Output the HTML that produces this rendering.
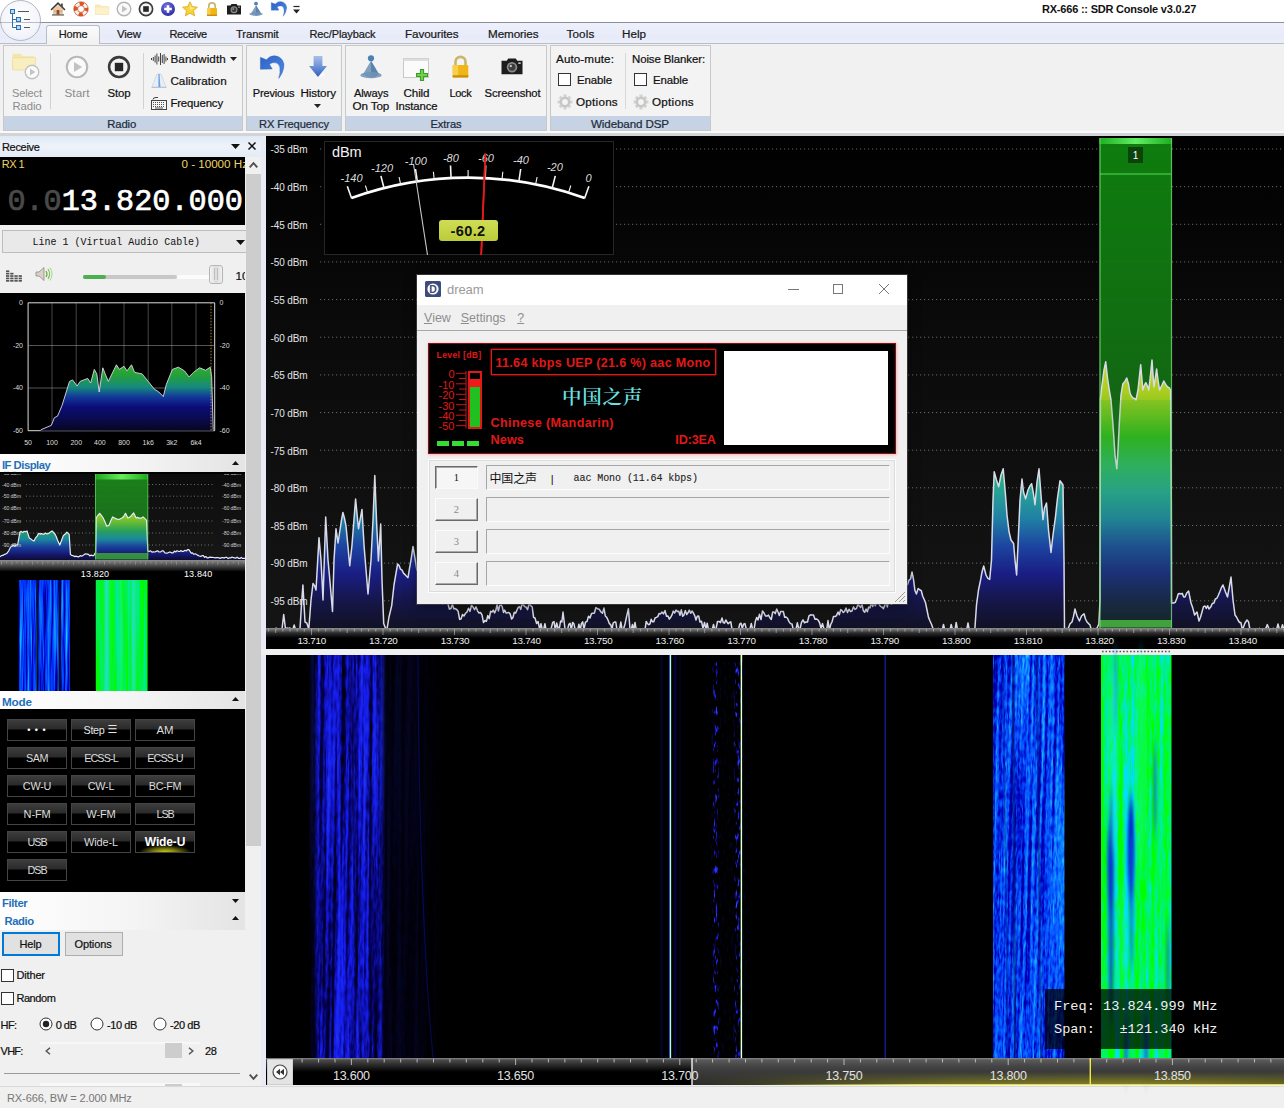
<!DOCTYPE html>
<html lang="en"><head><meta charset="utf-8"><title>RX-666 :: SDR Console v3.0.27</title>
<style>
html,body{margin:0;padding:0;background:#f0f0f0;}
body{width:1284px;height:1108px;overflow:hidden;font-family:"Liberation Sans","Noto Sans CJK SC",sans-serif;font-size:12px;color:#000;}
#app{position:relative;width:1284px;height:1108px;overflow:hidden;background:#f0f0f0;}
.a{position:absolute;}
.t{position:absolute;white-space:nowrap;line-height:1;}
.c{text-align:center;}
svg{position:absolute;overflow:visible;}
/* chrome */
#titlebar{left:0;top:0;width:1284px;height:22px;background:#fff;}
#tabrow{left:0;top:22px;width:1284px;height:21px;background:linear-gradient(#eef1fc,#e7ebf8 70%,#eceffa);border-top:1px solid #8a8f9a;box-sizing:border-box;}
#ribbon{left:0;top:43px;width:1284px;height:89px;background:#f1f1f1;border-top:1px solid #b9bdc6;box-sizing:border-box;}
#ribbonbot{left:0;top:131px;width:1284px;height:2px;background:#fafafa;}
#ribgap{left:0;top:133px;width:1284px;height:3px;background:#d2d4d8;}
.grp{position:absolute;top:45px;height:86px;border:1px solid #c6c8cc;box-sizing:border-box;background:#f3f3f3;}
.grp .lab{position:absolute;left:0;right:0;bottom:0;height:14px;background:#c5d3e4;text-align:center;font-size:12px;line-height:15px;color:#1e2b3c;}
.rt{position:absolute;white-space:nowrap;font-size:12px;line-height:13px;color:#111;}
.rt.g{color:#8b8b8b;}
.tab{position:absolute;top:28px;font-size:12px;line-height:13px;color:#1a1a1a;white-space:nowrap;transform:translateX(-50%);}

</style></head>
<body>
<div id="app">
<div class="a" id="titlebar"></div>
<div class="a" id="tabrow"></div>
<div class="a" id="ribbon"></div>
<div class="a" id="ribbonbot"></div><div class="a" id="ribgap"></div>
<div class="a" style="left:46px;top:25px;width:54px;height:19px;background:linear-gradient(#fbfbfd,#f1f1f1);border:1px solid #b9bdc6;border-bottom:none;border-radius:3px 3px 0 0;box-sizing:border-box;"></div>
<svg style="left:0;top:0" width="44" height="44" viewBox="0 0 44 44"><defs><radialGradient id="gapp" cx="0.5" cy="0.4" r="0.7"><stop offset="0" stop-color="#ffffff"/><stop offset="0.7" stop-color="#f3f5fb"/><stop offset="1" stop-color="#e6e9f4"/></radialGradient></defs><circle cx="20.5" cy="20.5" r="20" fill="url(#gapp)" stroke="#b4b7bf" stroke-width="1"/><path d="M0 22.5 H41" stroke="#8a8f9a" stroke-width="1" opacity="0.55"/><g fill="#b9d6f2" stroke="#2f6fb0" stroke-width="1"><rect x="10.5" y="9.5" width="4" height="4"/><rect x="16.5" y="17.5" width="4" height="4"/><rect x="16.5" y="25.5" width="4" height="4"/></g><path d="M12.5 14 V27.5 H16 M12.5 19.5 H16" fill="none" stroke="#2f6fb0" stroke-width="1"/><path d="M18 11.5 H29 M24 19.5 H30 M24 27.5 H30" stroke="#555" stroke-width="1"/></svg>
<svg style="left:50.0px;top:0.8px" width="16" height="16" viewBox="0 0 16 16"><path d="M1.5 8.5 L8 2.2 L14.5 8.5" fill="none" stroke="#3a3a3a" stroke-width="1.6" stroke-linecap="round"/><rect x="11" y="2.5" width="1.8" height="3.5" fill="#5a4a40"/><path d="M3 8.5 L8 3.8 L13 8.5 V13.5 H3 Z" fill="#e9c9a6"/><rect x="6.6" y="9" width="2.8" height="4.5" fill="#9a4a1e"/><rect x="3.8" y="9.2" width="2" height="2.2" fill="#d9b48c"/><rect x="10.2" y="9.2" width="2" height="2.2" fill="#d9b48c"/><rect x="2" y="13.4" width="12" height="1.1" fill="#4a4a4a"/></svg>
<svg style="left:72.5px;top:0.8px" width="16" height="16" viewBox="0 0 16 16"><circle cx="8" cy="8" r="5.3" fill="none" stroke="#f2f2f2" stroke-width="3.6"/><circle cx="8" cy="8" r="5.3" fill="none" stroke="#e2531c" stroke-width="3.6" stroke-dasharray="4.2 4.13" stroke-dashoffset="2.1"/><circle cx="8" cy="8" r="7.2" fill="none" stroke="#c8451a" stroke-width="0.7"/><circle cx="8" cy="8" r="3.4" fill="none" stroke="#c8451a" stroke-width="0.7"/></svg>
<svg style="left:94.0px;top:0.8px" width="16" height="16" viewBox="0 0 16 16"><g opacity="0.75"><path d="M1 3.5 H6 L7.2 5 H14.5 V13.5 H1 Z" fill="#f3e3a0"/><path d="M1 6 H15.2 L14.5 13.5 H1 Z" fill="#fbeeb8" stroke="#ecd98c" stroke-width="0.5"/></g></svg>
<svg style="left:116.0px;top:0.8px" width="16" height="16" viewBox="0 0 16 16"><circle cx="8" cy="8" r="6.8" fill="#fafafa" stroke="#b4b4b4" stroke-width="1.4"/><path d="M6 4.6 L11.4 8 L6 11.4 Z" fill="#c2c2c2"/></svg>
<svg style="left:138.0px;top:0.8px" width="16" height="16" viewBox="0 0 16 16"><circle cx="8" cy="8" r="6.6" fill="#f4f4f4" stroke="#3b3b3b" stroke-width="1.7"/><rect x="5.2" y="5.2" width="5.6" height="5.6" fill="#262626"/></svg>
<svg style="left:160.0px;top:0.8px" width="16" height="16" viewBox="0 0 16 16"><defs><radialGradient id="gplus" cx="0.4" cy="0.3" r="0.8"><stop offset="0" stop-color="#6f74e0"/><stop offset="1" stop-color="#24249a"/></radialGradient></defs><circle cx="8" cy="8" r="7" fill="url(#gplus)"/><path d="M8 4.2 V11.8 M4.2 8 H11.8" stroke="#fff" stroke-width="2.6"/></svg>
<svg style="left:182.0px;top:0.8px" width="16" height="16" viewBox="0 0 16 16"><path d="M8 0.8 L10.2 5.6 L15.4 6.2 L11.5 9.7 L12.6 14.9 L8 12.2 L3.4 14.9 L4.5 9.7 L0.6 6.2 L5.8 5.6 Z" fill="#f7d43a" stroke="#d9a520" stroke-width="0.8" stroke-linejoin="round"/><path d="M8 3 L9.4 6.4 L12.8 6.8 L8 9 Z" fill="#fdf0a0" opacity="0.8"/></svg>
<svg style="left:204.0px;top:0.8px" width="16" height="16" viewBox="0 0 16 16"><path d="M4.8 7.5 V5 A3.2 3.2 0 0 1 11.2 5 V7.5" fill="none" stroke="#c9b66a" stroke-width="1.7"/><rect x="3" y="7" width="10" height="8" rx="0.8" fill="#f0b618"/><rect x="3" y="7" width="3.5" height="8" fill="#f7cf4a"/><rect x="3" y="13.6" width="10" height="1.4" fill="#c98e0c"/></svg>
<svg style="left:226.0px;top:0.8px" width="16" height="16" viewBox="0 0 16 16"><path d="M1 4.5 H4.5 L5.5 3 H10.5 L11.5 4.5 H15 V13.5 H1 Z" fill="#1d1d1d"/><circle cx="8" cy="8.8" r="3.5" fill="#8a8a8a"/><circle cx="8" cy="8.8" r="2.3" fill="#3c3c3c"/><circle cx="7.2" cy="8" r="0.8" fill="#bdbdbd"/><rect x="12.2" y="5.6" width="1.6" height="1" fill="#d8d8d8"/></svg>
<svg style="left:248.0px;top:0.8px" width="16" height="16" viewBox="0 0 16 16"><circle cx="8" cy="2.6" r="1.9" fill="#4a7fb8"/><path d="M8 4.2 L13 12.6 Q8 16.2 3 12.6 Z" fill="#7fa0bf"/><path d="M8 4.2 L13 12.6 Q10.5 14.4 8 14.5 Z" fill="#5c84ab"/><ellipse cx="8" cy="13" rx="6.6" ry="1.9" fill="#6e93b6" opacity="0.85"/></svg>
<svg style="left:271.0px;top:0.8px" width="16" height="16" viewBox="0 0 25 24"><defs><linearGradient id="gundo16" x1="0" y1="0" x2="1" y2="1"><stop offset="0" stop-color="#2b63c6"/><stop offset="1" stop-color="#4f8ae4"/></linearGradient></defs><path d="M0.4 1.9 L6.6 4.3 Q10 0.2 14.4 0.2 Q20 0.4 22.8 4.5 Q25 8 24.3 12 Q23.5 18 19.1 23.4 Q21 17 20.3 12.5 Q19.5 8.5 16.5 7.5 Q12.5 6.5 9.7 9 L12.5 13.8 L0.4 14 Z" fill="url(#gundo16)" stroke="#2a5cb8" stroke-width="0.4" stroke-linejoin="round"/></svg>
<svg style="left:292px;top:5px" width="9" height="10" viewBox="0 0 9 10"><path d="M1.5 1.5 H7.5" stroke="#222" stroke-width="1.2"/><path d="M1 4.5 H8 L4.5 8.5 Z" fill="#222"/></svg>
<div class="t" style="left:1042.0px;top:2.0px;font-size:11.0px;line-height:14px;color:#111;font-weight:bold;letter-spacing:-0.21px;">RX-666 :: SDR Console v3.0.27</div>
<div class="t" style="left:58.7px;top:27.0px;font-size:11.01px;line-height:14px;color:#1a1a1a;letter-spacing:-0.14px;-webkit-text-stroke:0.22px currentColor;">Home</div>
<div class="t" style="left:116.9px;top:27.0px;font-size:11.44px;line-height:14px;color:#1a1a1a;letter-spacing:-0.12px;-webkit-text-stroke:0.22px currentColor;">View</div>
<div class="t" style="left:169.4px;top:27.0px;font-size:11.0px;line-height:14px;color:#1a1a1a;letter-spacing:-0.32px;-webkit-text-stroke:0.22px currentColor;">Receive</div>
<div class="t" style="left:236.0px;top:27.0px;font-size:11.31px;line-height:14px;color:#1a1a1a;letter-spacing:-0.11px;-webkit-text-stroke:0.22px currentColor;">Transmit</div>
<div class="t" style="left:309.5px;top:27.0px;font-size:11.01px;line-height:14px;color:#1a1a1a;letter-spacing:-0.11px;-webkit-text-stroke:0.22px currentColor;">Rec/Playback</div>
<div class="t" style="left:405.0px;top:27.0px;font-size:11.69px;line-height:14px;color:#1a1a1a;letter-spacing:-0.11px;-webkit-text-stroke:0.22px currentColor;">Favourites</div>
<div class="t" style="left:488.0px;top:27.0px;font-size:11.7px;line-height:14px;color:#1a1a1a;letter-spacing:-0.11px;-webkit-text-stroke:0.22px currentColor;">Memories</div>
<div class="t" style="left:566.5px;top:27.0px;font-size:11.7px;line-height:14px;color:#1a1a1a;letter-spacing:0.14px;-webkit-text-stroke:0.22px currentColor;">Tools</div>
<div class="t" style="left:622.0px;top:27.0px;font-size:11.7px;line-height:14px;color:#1a1a1a;letter-spacing:-0.02px;-webkit-text-stroke:0.22px currentColor;">Help</div>
<div class="grp" style="left:3px;width:240px;"><div class="lab"></div></div>
<div class="grp" style="left:246px;width:96px;"><div class="lab"></div></div>
<div class="grp" style="left:345px;width:202px;"><div class="lab"></div></div>
<div class="grp" style="left:550px;width:161px;"><div class="lab"></div></div>
<div class="t" style="left:107.2px;top:117.0px;font-size:11.32px;line-height:14px;color:#1e2b3c;letter-spacing:-0.12px;-webkit-text-stroke:0.22px currentColor;">Radio</div>
<div class="t" style="left:259.0px;top:117.0px;font-size:11.17px;line-height:14px;color:#1e2b3c;letter-spacing:-0.12px;-webkit-text-stroke:0.22px currentColor;">RX Frequency</div>
<div class="t" style="left:430.5px;top:117.0px;font-size:11.16px;line-height:14px;color:#1e2b3c;letter-spacing:-0.10px;-webkit-text-stroke:0.22px currentColor;">Extras</div>
<div class="t" style="left:591.0px;top:117.0px;font-size:11.64px;line-height:14px;color:#1e2b3c;letter-spacing:-0.13px;-webkit-text-stroke:0.22px currentColor;">Wideband DSP</div>
<div class="a" style="left:50px;top:53px;width:1px;height:56px;background:#d2d2d2;"></div>
<div class="a" style="left:143px;top:53px;width:1px;height:56px;background:#d2d2d2;"></div>
<div class="a" style="left:624.5px;top:53px;width:1px;height:56px;background:#d8d8d8;"></div>
<svg style="left:11.0px;top:48.0px" width="26" height="26" viewBox="0 0 16 16"><g opacity="0.85"><path d="M1 3.5 H6 L7.2 5 H14.5 V13.5 H1 Z" fill="#f3e3a0"/><path d="M1 6 H15.2 L14.5 13.5 H1 Z" fill="#fbeeb8" stroke="#ecd98c" stroke-width="0.5"/></g></svg>
<svg style="left:24.0px;top:64.0px" width="16" height="16" viewBox="0 0 16 16"><circle cx="8" cy="8" r="6.8" fill="#fafafa" stroke="#c2c2c2" stroke-width="1.4"/><path d="M6 4.6 L11.4 8 L6 11.4 Z" fill="#c4c4c4"/></svg>
<div class="t" style="left:12.0px;top:86.0px;font-size:11.01px;line-height:14px;color:#8b8b8b;letter-spacing:-0.10px;">Select</div>
<div class="t" style="left:12.5px;top:99.0px;font-size:11.32px;line-height:14px;color:#8b8b8b;letter-spacing:-0.12px;">Radio</div>
<svg style="left:65.0px;top:55.0px" width="24" height="24" viewBox="0 0 16 16"><circle cx="8" cy="8" r="6.8" fill="#fafafa" stroke="#b9b9b9" stroke-width="1.4"/><path d="M6 4.6 L11.4 8 L6 11.4 Z" fill="#c2c2c2"/></svg>
<div class="t" style="left:64.5px;top:86.0px;font-size:11.7px;line-height:14px;color:#8b8b8b;letter-spacing:0.06px;">Start</div>
<svg style="left:107.0px;top:55.0px" width="24" height="24" viewBox="0 0 16 16"><circle cx="8" cy="8" r="6.6" fill="#f4f4f4" stroke="#3b3b3b" stroke-width="1.7"/><rect x="5.2" y="5.2" width="5.6" height="5.6" fill="#262626"/></svg>
<div class="t" style="left:107.5px;top:86.0px;font-size:11.4px;line-height:14px;color:#111;letter-spacing:-0.11px;-webkit-text-stroke:0.22px currentColor;">Stop</div>
<svg style="left:150.5px;top:52px" width="17" height="14" viewBox="0 0 17 14"><rect x="0.0" y="6.0" width="1" height="2" fill="#444"/><rect x="1.8" y="5.0" width="1" height="4" fill="#444"/><rect x="3.6" y="3.5" width="1" height="7" fill="#444"/><rect x="5.4" y="1.5" width="1" height="11" fill="#444"/><rect x="7.2" y="4.5" width="1" height="5" fill="#444"/><rect x="9.0" y="1.0" width="1" height="12" fill="#444"/><rect x="10.8" y="3.0" width="1" height="8" fill="#444"/><rect x="12.6" y="2.0" width="1" height="10" fill="#444"/><rect x="14.4" y="4.5" width="1" height="5" fill="#444"/><rect x="16.0" y="6.0" width="1" height="2" fill="#444"/></svg>
<div class="t" style="left:170.4px;top:52.0px;font-size:11.7px;line-height:14px;color:#111;letter-spacing:0.10px;-webkit-text-stroke:0.22px currentColor;">Bandwidth</div>
<svg style="left:230px;top:57px" width="7" height="4" viewBox="0 0 7 4"><path d="M0 0 H7 L3.5 4 Z" fill="#222"/></svg>
<svg style="left:151px;top:73px" width="16" height="16" viewBox="0 0 16 16"><path d="M6 1 H10 L15 14 H1 Z" fill="#e7eef8" stroke="#c9d2df" stroke-width="0.8"/><path d="M8 1 L9.6 14 H8 Z" fill="#7fb0e6"/><path d="M8 1 V14" stroke="#5b93d6" stroke-width="1"/><path d="M0.5 14.5 H15.5" stroke="#b8c4d6" stroke-width="1"/></svg>
<div class="t" style="left:170.4px;top:74.0px;font-size:11.7px;line-height:14px;color:#111;letter-spacing:0.04px;-webkit-text-stroke:0.22px currentColor;">Calibration</div>
<svg style="left:151px;top:96px" width="16" height="15" viewBox="0 0 16 15"><path d="M2 3.5 Q2 1.5 5 1.5 H7" fill="none" stroke="#444" stroke-width="1"/><rect x="0.5" y="4.5" width="15" height="9" fill="#f6f6f6" stroke="#444" stroke-width="1"/><path d="M2 6.5 H14 M2 8.5 H14 M2 10.5 H14" stroke="#555" stroke-width="1" stroke-dasharray="1 1"/><path d="M4 12 H12" stroke="#555" stroke-width="1"/></svg>
<div class="t" style="left:170.4px;top:96.0px;font-size:11.36px;line-height:14px;color:#111;letter-spacing:-0.12px;-webkit-text-stroke:0.22px currentColor;">Frequency</div>
<svg style="left:260.4px;top:54.5px" width="24.5" height="24.5" viewBox="0 0 25 24"><defs><linearGradient id="gundo24" x1="0" y1="0" x2="1" y2="1"><stop offset="0" stop-color="#2b63c6"/><stop offset="1" stop-color="#4f8ae4"/></linearGradient></defs><path d="M0.4 1.9 L6.6 4.3 Q10 0.2 14.4 0.2 Q20 0.4 22.8 4.5 Q25 8 24.3 12 Q23.5 18 19.1 23.4 Q21 17 20.3 12.5 Q19.5 8.5 16.5 7.5 Q12.5 6.5 9.7 9 L12.5 13.8 L0.4 14 Z" fill="url(#gundo24)" stroke="#2a5cb8" stroke-width="0.4" stroke-linejoin="round"/></svg>
<div class="t" style="left:252.7px;top:86.0px;font-size:11.0px;line-height:14px;color:#111;letter-spacing:-0.14px;-webkit-text-stroke:0.22px currentColor;">Previous</div>
<svg style="left:309.0px;top:55.7px" width="18.0" height="21" viewBox="0 0 18 21"><defs><linearGradient id="gdn" x1="0" y1="0" x2="0" y2="1"><stop offset="0" stop-color="#a9bfe8"/><stop offset="0.5" stop-color="#6e92d8"/><stop offset="1" stop-color="#2f5cc0"/></linearGradient></defs><path d="M4.6 0 H13.4 V10 H18 L9 21 L0 10 H4.6 Z" fill="url(#gdn)"/><path d="M9 21.5 L14.5 15 L16 20 Z" fill="#fff" opacity="0.6"/></svg>
<div class="t" style="left:300.4px;top:86.0px;font-size:11.64px;line-height:14px;color:#111;letter-spacing:-0.10px;-webkit-text-stroke:0.22px currentColor;">History</div>
<svg style="left:314px;top:104px" width="7" height="4" viewBox="0 0 7 4"><path d="M0 0 H7 L3.5 4 Z" fill="#222"/></svg>
<svg style="left:358.0px;top:54.0px" width="26" height="26" viewBox="0 0 16 16"><circle cx="8" cy="2.6" r="1.9" fill="#4a7fb8"/><path d="M8 4.2 L13 12.6 Q8 16.2 3 12.6 Z" fill="#7fa0bf"/><path d="M8 4.2 L13 12.6 Q10.5 14.4 8 14.5 Z" fill="#5c84ab"/><ellipse cx="8" cy="13" rx="6.6" ry="1.9" fill="#6e93b6" opacity="0.85"/></svg>
<div class="t" style="left:354.0px;top:86.0px;font-size:11.08px;line-height:14px;color:#111;letter-spacing:-0.12px;-webkit-text-stroke:0.22px currentColor;">Always</div>
<div class="t" style="left:352.5px;top:99.0px;font-size:11.7px;line-height:14px;color:#111;letter-spacing:-0.12px;-webkit-text-stroke:0.22px currentColor;">On Top</div>
<svg style="left:402px;top:56px" width="28" height="26" viewBox="0 0 28 26"><rect x="1.5" y="2.5" width="25" height="19" fill="#fbfbfb" stroke="#c9c9c9" stroke-width="1"/><rect x="1.5" y="2.5" width="25" height="2.5" fill="#dedede"/><path d="M20 13 V25 M14 19 H26" stroke="#3a9a2a" stroke-width="4.2"/><path d="M20 14 V24 M15 19 H25" stroke="#6fd24c" stroke-width="2.2"/></svg>
<div class="t" style="left:403.5px;top:86.0px;font-size:11.64px;line-height:14px;color:#111;letter-spacing:-0.11px;-webkit-text-stroke:0.22px currentColor;">Child</div>
<div class="t" style="left:395.5px;top:99.0px;font-size:11.33px;line-height:14px;color:#111;letter-spacing:-0.10px;-webkit-text-stroke:0.22px currentColor;">Instance</div>
<svg style="left:448.0px;top:53.5px" width="25" height="25" viewBox="0 0 16 16"><path d="M4.8 7.5 V5 A3.2 3.2 0 0 1 11.2 5 V7.5" fill="none" stroke="#c9b66a" stroke-width="1.7"/><rect x="3" y="7" width="10" height="8" rx="0.8" fill="#f0b618"/><rect x="3" y="7" width="3.5" height="8" fill="#f7cf4a"/><rect x="3" y="13.6" width="10" height="1.4" fill="#c98e0c"/></svg>
<div class="t" style="left:449.6px;top:86.0px;font-size:11.0px;line-height:14px;color:#111;letter-spacing:-0.36px;-webkit-text-stroke:0.22px currentColor;">Lock</div>
<svg style="left:500.0px;top:54.0px" width="24" height="24" viewBox="0 0 16 16"><path d="M1 4.5 H4.5 L5.5 3 H10.5 L11.5 4.5 H15 V13.5 H1 Z" fill="#1d1d1d"/><circle cx="8" cy="8.8" r="3.5" fill="#8a8a8a"/><circle cx="8" cy="8.8" r="2.3" fill="#3c3c3c"/><circle cx="7.2" cy="8" r="0.8" fill="#bdbdbd"/><rect x="12.2" y="5.6" width="1.6" height="1" fill="#d8d8d8"/></svg>
<div class="t" style="left:484.6px;top:86.0px;font-size:11.29px;line-height:14px;color:#111;letter-spacing:-0.11px;-webkit-text-stroke:0.22px currentColor;">Screenshot</div>
<div class="t" style="left:556.0px;top:52.0px;font-size:11.7px;line-height:14px;color:#111;letter-spacing:0.08px;-webkit-text-stroke:0.22px currentColor;">Auto-mute:</div>
<div class="a" style="left:558px;top:73px;width:13px;height:13px;border:1px solid #333;background:#fff;box-sizing:border-box;"></div>
<div class="t" style="left:577.0px;top:73.0px;font-size:11.46px;line-height:14px;color:#111;letter-spacing:-0.11px;-webkit-text-stroke:0.22px currentColor;">Enable</div>
<svg style="left:557.0px;top:94.3px" width="16" height="16" viewBox="0 0 16 16"><g stroke="#d2d2d2" stroke-width="3.2"><path d="M8 0.6 V3.4 M8 12.6 V15.4 M0.6 8 H3.4 M12.6 8 H15.4 M2.8 2.8 L4.8 4.8 M11.2 11.2 L13.2 13.2 M2.8 13.2 L4.8 11.2 M11.2 4.8 L13.2 2.8"/></g><circle cx="8" cy="8" r="4.1" fill="#f4f4f4" stroke="#c6c6c6" stroke-width="2.4"/></svg>
<div class="t" style="left:576.0px;top:95.0px;font-size:11.7px;line-height:14px;color:#111;letter-spacing:0.24px;-webkit-text-stroke:0.22px currentColor;">Options</div>
<div class="t" style="left:632.0px;top:52.0px;font-size:11.45px;line-height:14px;color:#111;letter-spacing:-0.10px;-webkit-text-stroke:0.22px currentColor;">Noise Blanker:</div>
<div class="a" style="left:634px;top:73px;width:13px;height:13px;border:1px solid #333;background:#fff;box-sizing:border-box;"></div>
<div class="t" style="left:653.0px;top:73.0px;font-size:11.46px;line-height:14px;color:#111;letter-spacing:-0.11px;-webkit-text-stroke:0.22px currentColor;">Enable</div>
<svg style="left:633.0px;top:94.3px" width="16" height="16" viewBox="0 0 16 16"><g stroke="#d2d2d2" stroke-width="3.2"><path d="M8 0.6 V3.4 M8 12.6 V15.4 M0.6 8 H3.4 M12.6 8 H15.4 M2.8 2.8 L4.8 4.8 M11.2 11.2 L13.2 13.2 M2.8 13.2 L4.8 11.2 M11.2 4.8 L13.2 2.8"/></g><circle cx="8" cy="8" r="4.1" fill="#f4f4f4" stroke="#c6c6c6" stroke-width="2.4"/></svg>
<div class="t" style="left:652.0px;top:95.0px;font-size:11.7px;line-height:14px;color:#111;letter-spacing:0.24px;-webkit-text-stroke:0.22px currentColor;">Options</div>
<div class="a" style="left:0px;top:1086px;width:1284px;height:22px;background:#f0f0f0;border-top:1px solid #d9d9d9;box-sizing:border-box;"></div>
<div class="t" style="left:7.0px;top:1091.0px;font-size:11.06px;line-height:14px;color:#777;letter-spacing:-0.12px;">RX-666, BW = 2.000 MHz</div>
<div class="a" style="left:0px;top:136px;width:266px;height:950px;background:#f0f0f0;"></div>
<div class="a" style="left:0px;top:136px;width:262px;height:21px;background:linear-gradient(#dfe9f5,#eef3fa 50%,#e3ebf5);"></div>
<div class="t" style="left:2.0px;top:140.0px;font-size:11.0px;line-height:14px;color:#111;letter-spacing:-0.32px;-webkit-text-stroke:0.22px currentColor;">Receive</div>
<svg style="left:231px;top:144px" width="9" height="5" viewBox="0 0 9 5"><path d="M0 0 H9 L4.5 5 Z" fill="#111"/></svg>
<svg style="left:248px;top:141.5px" width="8" height="8" viewBox="0 0 8 8"><path d="M0.5 0.5 L7.5 7.5 M7.5 0.5 L0.5 7.5" stroke="#111" stroke-width="1.5"/></svg>
<div class="a" style="left:246px;top:157px;width:15px;height:929px;background:#f0f0f0;"></div>
<div class="a" style="left:246px;top:174px;width:15px;height:672px;background:#cdcdcd;"></div>
<svg style="left:249px;top:162px" width="9" height="6" viewBox="0 0 9 6"><path d="M0.7 5.3 L4.5 1.2 L8.3 5.3" fill="none" stroke="#505050" stroke-width="1.9"/></svg>
<svg style="left:249px;top:1074px" width="9" height="6" viewBox="0 0 9 6"><path d="M0.7 0.7 L4.5 4.8 L8.3 0.7" fill="none" stroke="#505050" stroke-width="1.9"/></svg>
<div class="a" style="left:0;top:157px;width:245px;height:68px;background:#000;overflow:hidden;">
<div class="t" style="left:1.7px;top:0.0px;font-size:11.0px;line-height:14px;color:#ecd46a;letter-spacing:-0.49px;">RX 1</div>
<div class="t" style="left:181.5px;top:0.0px;font-size:11.7px;line-height:14px;color:#ecd46a;letter-spacing:-0.04px;">0 - 10000 Hz</div>
<div class="t" style="left:7.4px;top:27px;font-family:'Liberation Mono',monospace;font-size:30.2px;line-height:36px;color:#fff;letter-spacing:0px;-webkit-text-stroke:0.7px currentColor;"><span style="color:#4a4a4a">0.0</span>13.820.000</div>
</div>
<div class="a" style="left:2px;top:229.5px;width:244px;height:23px;background:#e9e9e9;border:1px solid #bdbdbd;border-right:none;box-sizing:border-box;"></div>
<div class="t" style="left:32.6px;top:237.0px;font-size:10px;line-height:12px;color:#111;font-family:'Liberation Mono','Noto Sans CJK SC',monospace;letter-spacing:-0.02px;">Line 1 (Virtual Audio Cable)</div>
<svg style="left:236px;top:240px" width="9" height="5" viewBox="0 0 9 5"><path d="M0 0 H9 L4.5 5 Z" fill="#111"/></svg>
<svg style="left:6px;top:269px" width="17" height="13" viewBox="0 0 17 13"><rect x="0.0" y="11.0" width="3.3" height="1.7" fill="#555"/><rect x="0.0" y="8.6" width="3.3" height="1.7" fill="#555"/><rect x="0.0" y="6.2" width="3.3" height="1.7" fill="#555"/><rect x="0.0" y="3.8" width="3.3" height="1.7" fill="#555"/><rect x="0.0" y="1.4" width="3.3" height="1.7" fill="#555"/><rect x="4.2" y="11.0" width="3.3" height="1.7" fill="#555"/><rect x="4.2" y="8.6" width="3.3" height="1.7" fill="#555"/><rect x="4.2" y="6.2" width="3.3" height="1.7" fill="#555"/><rect x="4.2" y="3.8" width="3.3" height="1.7" fill="#555"/><rect x="8.4" y="11.0" width="3.3" height="1.7" fill="#555"/><rect x="8.4" y="8.6" width="3.3" height="1.7" fill="#555"/><rect x="8.4" y="6.2" width="3.3" height="1.7" fill="#555"/><rect x="12.6" y="11.0" width="3.3" height="1.7" fill="#555"/><rect x="12.6" y="8.6" width="3.3" height="1.7" fill="#555"/><rect x="12.6" y="6.2" width="3.3" height="1.7" fill="#555"/></svg>
<svg style="left:35px;top:266px" width="18" height="16" viewBox="0 0 18 16"><path d="M1 6 H4 L9 1.5 V14.5 L4 10 H1 Z" fill="#d9d2c4" stroke="#8c8c8c" stroke-width="0.8" stroke-linejoin="round"/><path d="M11 5 Q13 8 11 11" fill="none" stroke="#5fae3a" stroke-width="1.2"/><path d="M13 3 Q16.2 8 13 13" fill="none" stroke="#7cc257" stroke-width="1.2"/><path d="M15 1.5 Q19 8 15 14.5" fill="none" stroke="#a4d98a" stroke-width="1"/></svg>
<div class="a" style="left:83px;top:275px;width:94px;height:4px;background:#c8c8c8;border-radius:2px;"></div>
<div class="a" style="left:177px;top:275px;width:34px;height:4px;background:#fbfbfb;border-radius:2px;"></div>
<div class="a" style="left:83px;top:275px;width:23px;height:4px;background:#4caf50;border-radius:2px;"></div>
<div class="a" style="left:209px;top:264.5px;width:14px;height:19px;background:linear-gradient(90deg,#f4f4f4,#dcdcdc 50%,#f0f0f0);border:1px solid #b5b5b5;border-radius:3px;box-sizing:border-box;"></div>
<div class="a" style="left:214px;top:268px;width:1px;height:12px;background:#bdbdbd;"></div>
<div class="a" style="left:217px;top:268px;width:1px;height:12px;background:#bdbdbd;"></div>
<div class="a" style="left:230px;top:266px;width:15px;height:20px;overflow:hidden;"><div class="t" style="left:5.5px;top:3.0px;font-size:11.7px;line-height:14px;color:#111;-webkit-text-stroke:0.22px currentColor;">100</div>
</div>
<div class="a" style="left:0px;top:293px;width:245px;height:161px;background:#000;"></div>
<svg style="left:0;top:0" width="245" height="460" viewBox="0 0 245 460"><defs><linearGradient id="gaud" gradientUnits="userSpaceOnUse" x1="0" y1="360" x2="0" y2="431"><stop offset="0" stop-color="#3cb52e"/><stop offset="0.22" stop-color="#23a03a"/><stop offset="0.38" stop-color="#178a7c"/><stop offset="0.52" stop-color="#12389a"/><stop offset="0.66" stop-color="#0c0c78"/><stop offset="0.85" stop-color="#0a0a4a"/><stop offset="1" stop-color="#06061e"/></linearGradient></defs><path d="M28.1 302.8 V430.7" stroke="#e8e8e8" stroke-width="1" opacity="0.95"/><path d="M52 302.8 V430.7" stroke="#b0b0b0" stroke-width="0.8" opacity="0.5"/><path d="M76.2 302.8 V430.7" stroke="#b0b0b0" stroke-width="0.8" opacity="0.5"/><path d="M99.8 302.8 V430.7" stroke="#b0b0b0" stroke-width="0.8" opacity="0.5"/><path d="M124 302.8 V430.7" stroke="#b0b0b0" stroke-width="0.8" opacity="0.5"/><path d="M148.2 302.8 V430.7" stroke="#b0b0b0" stroke-width="0.8" opacity="0.5"/><path d="M171.8 302.8 V430.7" stroke="#b0b0b0" stroke-width="0.8" opacity="0.5"/><path d="M196 302.8 V430.7" stroke="#b0b0b0" stroke-width="0.8" opacity="0.5"/><path d="M214.7 302.8 V430.7" stroke="#e8e8e8" stroke-width="1" opacity="0.95"/><path d="M28.1 302.8 H214.7" stroke="#e8e8e8" stroke-width="1" opacity="0.95"/><path d="M28.1 345.5 H214.7" stroke="#b0b0b0" stroke-width="0.8" opacity="0.6"/><path d="M28.1 388 H214.7" stroke="#b0b0b0" stroke-width="0.8" opacity="0.6"/><path d="M28.1 430.7 H214.7" stroke="#e8e8e8" stroke-width="1" opacity="0.95"/><path d="M40.8 429.8 L51.4 425.3 L54.4 417.7 L57.5 416.2 L62.0 405.6 L69.5 381.4 L72.6 379.9 L77.1 386.0 L80.1 381.4 L87.7 378.4 L90.7 383.0 L94.3 369.4 L96.8 373.9 L99.2 392.0 L102.8 367.8 L105.2 373.9 L108.3 381.4 L116.4 364.8 L119.4 369.4 L124.0 366.3 L127.0 370.9 L131.5 364.8 L134.6 372.4 L142.1 373.9 L148.2 381.4 L154.2 389.0 L158.8 392.0 L163.3 396.6 L166.3 384.5 L172.4 369.4 L178.4 367.2 L184.5 370.9 L189.0 376.9 L193.5 372.4 L199.6 367.8 L205.6 370.3 L210.2 367.2 L211.7 376.9 L213.2 429.8 L213.2 430.7 L40.8 430.7 Z" fill="url(#gaud)"/><path d="M40.8 429.8 L51.4 425.3 L54.4 417.7 L57.5 416.2 L62.0 405.6 L69.5 381.4 L72.6 379.9 L77.1 386.0 L80.1 381.4 L87.7 378.4 L90.7 383.0 L94.3 369.4 L96.8 373.9 L99.2 392.0 L102.8 367.8 L105.2 373.9 L108.3 381.4 L116.4 364.8 L119.4 369.4 L124.0 366.3 L127.0 370.9 L131.5 364.8 L134.6 372.4 L142.1 373.9 L148.2 381.4 L154.2 389.0 L158.8 392.0 L163.3 396.6 L166.3 384.5 L172.4 369.4 L178.4 367.2 L184.5 370.9 L189.0 376.9 L193.5 372.4 L199.6 367.8 L205.6 370.3 L210.2 367.2 L211.7 376.9 L213.2 429.8" fill="none" stroke="#d6dce6" stroke-width="0.9"/><path d="M211 302.8 V430.7" stroke="#d9a441" stroke-width="0.8" stroke-dasharray="1.5 1.5"/></svg>
<div class="t" style="left:19.1px;top:299.0px;font-size:7px;line-height:8px;color:#ddd;">0</div>
<div class="t" style="left:219.5px;top:299.0px;font-size:7px;line-height:8px;color:#ddd;">0</div>
<div class="t" style="left:12.9px;top:342.0px;font-size:7px;line-height:8px;color:#ddd;">-20</div>
<div class="t" style="left:219.5px;top:342.0px;font-size:7px;line-height:8px;color:#ddd;">-20</div>
<div class="t" style="left:12.9px;top:384.0px;font-size:7px;line-height:8px;color:#ddd;">-40</div>
<div class="t" style="left:219.5px;top:384.0px;font-size:7px;line-height:8px;color:#ddd;">-40</div>
<div class="t" style="left:12.9px;top:427.0px;font-size:7px;line-height:8px;color:#ddd;">-60</div>
<div class="t" style="left:219.5px;top:427.0px;font-size:7px;line-height:8px;color:#ddd;">-60</div>
<div class="t" style="left:24.2px;top:439.0px;font-size:7px;line-height:8px;color:#ddd;">50</div>
<div class="t" style="left:46.2px;top:439.0px;font-size:7px;line-height:8px;color:#ddd;">100</div>
<div class="t" style="left:70.4px;top:439.0px;font-size:7px;line-height:8px;color:#ddd;">200</div>
<div class="t" style="left:94.0px;top:439.0px;font-size:7px;line-height:8px;color:#ddd;">400</div>
<div class="t" style="left:118.2px;top:439.0px;font-size:7px;line-height:8px;color:#ddd;">800</div>
<div class="t" style="left:142.6px;top:439.0px;font-size:7px;line-height:8px;color:#ddd;">1k6</div>
<div class="t" style="left:166.2px;top:439.0px;font-size:7px;line-height:8px;color:#ddd;">3k2</div>
<div class="t" style="left:190.4px;top:439.0px;font-size:7px;line-height:8px;color:#ddd;">6k4</div>
<div class="a" style="left:0px;top:454px;width:245px;height:18px;background:linear-gradient(90deg,#ffffff 0%,#f4f4f4 55%,#e4e4e4 100%);"></div>
<div class="t" style="left:1.9px;top:458.0px;font-size:11.28px;line-height:14px;color:#1f70b8;font-weight:bold;letter-spacing:-0.48px;">IF Display</div>
<svg style="left:232px;top:461px" width="7" height="4" viewBox="0 0 7 4"><path d="M0 4 H7 L3.5 0 Z" fill="#111"/></svg>
<div class="a" style="left:0px;top:472px;width:245px;height:219px;background:#000;"></div>
<div class="a" style="left:0px;top:472px;width:245px;height:88px;background:linear-gradient(#0c0c0c,#171717);"></div>
<svg style="left:0;top:0" width="245" height="700" viewBox="0 0 245 700"><defs><linearGradient id="gif" gradientUnits="userSpaceOnUse" x1="0" y1="510" x2="0" y2="560"><stop offset="0" stop-color="#b4d22a"/><stop offset="0.22" stop-color="#6fc030"/><stop offset="0.42" stop-color="#28a05a"/><stop offset="0.58" stop-color="#1c88a0"/><stop offset="0.75" stop-color="#1a3a9a"/><stop offset="0.9" stop-color="#15156a"/><stop offset="1" stop-color="#0c0c30"/></linearGradient><linearGradient id="gifband" x1="0" y1="0" x2="0" y2="1"><stop offset="0" stop-color="#1a8a1a"/><stop offset="1" stop-color="#1d6a1d"/></linearGradient><linearGradient id="gstrip" x1="0" y1="0" x2="0" y2="1"><stop offset="0" stop-color="#8c8c8c"/><stop offset="1" stop-color="#0a0a0a"/></linearGradient><linearGradient id="gcap" x1="0" y1="0" x2="1" y2="0"><stop offset="0" stop-color="#1fa81f"/><stop offset="0.5" stop-color="#6bea5b"/><stop offset="1" stop-color="#1fa81f"/></linearGradient></defs><path d="M26 484.5 H214" stroke="#999" stroke-width="0.7" stroke-dasharray="1 2.5"/><path d="M26 496.2 H214" stroke="#999" stroke-width="0.7" stroke-dasharray="1 2.5"/><path d="M26 508 H214" stroke="#999" stroke-width="0.7" stroke-dasharray="1 2.5"/><path d="M26 521 H214" stroke="#999" stroke-width="0.7" stroke-dasharray="1 2.5"/><path d="M26 533 H214" stroke="#999" stroke-width="0.7" stroke-dasharray="1 2.5"/><path d="M26 545 H214" stroke="#999" stroke-width="0.7" stroke-dasharray="1 2.5"/><rect x="95.5" y="473.5" width="52.3" height="86" fill="url(#gifband)" opacity="0.92"/><rect x="95.5" y="473.5" width="52.3" height="6" fill="url(#gcap)"/><path d="M0.0 556.7 L1.4 555.6 L2.8 555.4 L4.2 554.4 L5.6 554.1 L7.0 553.2 L8.6 551.1 L10.2 547.7 L11.7 546.2 L13.2 545.0 L14.7 546.2 L16.1 544.9 L17.6 545.0 L19.9 532.1 L21.3 531.4 L22.8 532.5 L24.2 531.3 L25.6 531.8 L27.0 530.9 L29.3 538.0 L30.9 538.9 L32.4 540.2 L34.0 541.0 L35.6 537.8 L37.1 536.1 L38.7 533.3 L40.1 534.1 L41.4 533.6 L42.8 534.1 L44.2 534.1 L45.5 533.1 L46.9 534.0 L48.6 533.4 L50.4 532.1 L52.1 530.9 L53.5 532.5 L54.9 534.0 L56.3 536.8 L58.1 541.6 L59.8 545.0 L61.6 540.3 L63.3 535.6 L65.1 534.3 L66.9 532.1 L69.2 534.4 L70.4 554.4 L71.8 555.5 L73.2 555.7 L74.6 556.6 L76.0 556.1 L77.4 556.7 L78.8 556.8 L80.2 555.7 L81.6 556.1 L83.0 555.5 L84.4 554.4 L85.8 553.8 L87.1 554.1 L88.5 554.4 L89.8 555.9 L91.1 555.1 L92.5 555.6 L93.8 555.6 L95.0 553.2 L95.7 553.2 L96.2 518.0 L97.9 515.3 L99.7 513.3 L101.5 515.7 L103.2 518.0 L105.0 521.9 L106.7 526.2 L109.1 525.1 L110.8 520.7 L112.6 516.9 L114.2 517.8 L115.7 518.6 L117.3 519.2 L118.9 519.5 L120.4 518.7 L122.0 518.0 L123.7 516.5 L125.5 513.3 L127.8 518.0 L129.3 517.4 L130.8 516.3 L132.2 514.5 L133.7 512.9 L136.1 518.0 L137.5 517.2 L138.9 518.2 L140.3 518.2 L141.7 517.8 L143.1 516.9 L144.9 518.7 L146.6 520.4 L147.8 550.9 L149.2 551.5 L150.6 550.8 L152.0 552.2 L153.4 551.9 L154.8 552.0 L156.2 551.4 L157.6 550.8 L159.0 552.0 L160.5 552.0 L161.9 550.9 L163.4 550.9 L165.0 553.0 L166.5 553.2 L167.9 552.8 L169.2 552.2 L170.5 552.2 L171.8 552.9 L173.1 552.8 L174.4 551.1 L175.7 552.0 L177.0 550.7 L178.3 551.3 L179.6 551.5 L180.9 550.6 L182.2 551.4 L183.6 551.4 L184.9 550.3 L186.2 551.0 L187.5 549.6 L188.8 549.7 L191.2 553.2 L192.5 552.9 L193.9 554.3 L195.3 553.8 L196.7 554.5 L198.0 555.4 L199.4 556.0 L200.7 556.4 L202.0 555.7 L203.3 555.7 L204.6 557.3 L205.9 556.5 L207.2 557.8 L208.5 557.8 L209.8 557.1 L211.1 557.4 L212.4 557.4 L213.7 557.5 L215.0 557.8 L216.3 557.7 L217.6 557.7 L218.9 557.8 L220.2 558.4 L221.5 557.7 L222.8 557.5 L224.2 558.1 L225.5 557.3 L226.8 557.4 L228.1 558.6 L229.4 557.8 L230.7 557.9 L232.0 557.0 L233.3 557.7 L234.6 557.9 L235.9 558.1 L237.2 557.2 L238.5 558.3 L239.9 558.4 L241.2 557.4 L242.5 558.5 L243.8 558.3 L245.1 558.4 L245 560 L0 560 Z" fill="url(#gif)"/><path d="M0.0 556.7 L1.4 555.6 L2.8 555.4 L4.2 554.4 L5.6 554.1 L7.0 553.2 L8.6 551.1 L10.2 547.7 L11.7 546.2 L13.2 545.0 L14.7 546.2 L16.1 544.9 L17.6 545.0 L19.9 532.1 L21.3 531.4 L22.8 532.5 L24.2 531.3 L25.6 531.8 L27.0 530.9 L29.3 538.0 L30.9 538.9 L32.4 540.2 L34.0 541.0 L35.6 537.8 L37.1 536.1 L38.7 533.3 L40.1 534.1 L41.4 533.6 L42.8 534.1 L44.2 534.1 L45.5 533.1 L46.9 534.0 L48.6 533.4 L50.4 532.1 L52.1 530.9 L53.5 532.5 L54.9 534.0 L56.3 536.8 L58.1 541.6 L59.8 545.0 L61.6 540.3 L63.3 535.6 L65.1 534.3 L66.9 532.1 L69.2 534.4 L70.4 554.4 L71.8 555.5 L73.2 555.7 L74.6 556.6 L76.0 556.1 L77.4 556.7 L78.8 556.8 L80.2 555.7 L81.6 556.1 L83.0 555.5 L84.4 554.4 L85.8 553.8 L87.1 554.1 L88.5 554.4 L89.8 555.9 L91.1 555.1 L92.5 555.6 L93.8 555.6 L95.0 553.2 L95.7 553.2 L96.2 518.0 L97.9 515.3 L99.7 513.3 L101.5 515.7 L103.2 518.0 L105.0 521.9 L106.7 526.2 L109.1 525.1 L110.8 520.7 L112.6 516.9 L114.2 517.8 L115.7 518.6 L117.3 519.2 L118.9 519.5 L120.4 518.7 L122.0 518.0 L123.7 516.5 L125.5 513.3 L127.8 518.0 L129.3 517.4 L130.8 516.3 L132.2 514.5 L133.7 512.9 L136.1 518.0 L137.5 517.2 L138.9 518.2 L140.3 518.2 L141.7 517.8 L143.1 516.9 L144.9 518.7 L146.6 520.4 L147.8 550.9 L149.2 551.5 L150.6 550.8 L152.0 552.2 L153.4 551.9 L154.8 552.0 L156.2 551.4 L157.6 550.8 L159.0 552.0 L160.5 552.0 L161.9 550.9 L163.4 550.9 L165.0 553.0 L166.5 553.2 L167.9 552.8 L169.2 552.2 L170.5 552.2 L171.8 552.9 L173.1 552.8 L174.4 551.1 L175.7 552.0 L177.0 550.7 L178.3 551.3 L179.6 551.5 L180.9 550.6 L182.2 551.4 L183.6 551.4 L184.9 550.3 L186.2 551.0 L187.5 549.6 L188.8 549.7 L191.2 553.2 L192.5 552.9 L193.9 554.3 L195.3 553.8 L196.7 554.5 L198.0 555.4 L199.4 556.0 L200.7 556.4 L202.0 555.7 L203.3 555.7 L204.6 557.3 L205.9 556.5 L207.2 557.8 L208.5 557.8 L209.8 557.1 L211.1 557.4 L212.4 557.4 L213.7 557.5 L215.0 557.8 L216.3 557.7 L217.6 557.7 L218.9 557.8 L220.2 558.4 L221.5 557.7 L222.8 557.5 L224.2 558.1 L225.5 557.3 L226.8 557.4 L228.1 558.6 L229.4 557.8 L230.7 557.9 L232.0 557.0 L233.3 557.7 L234.6 557.9 L235.9 558.1 L237.2 557.2 L238.5 558.3 L239.9 558.4 L241.2 557.4 L242.5 558.5 L243.8 558.3 L245.1 558.4" fill="none" stroke="#e8ebf4" stroke-width="1.2" stroke-linejoin="round"/><rect x="95.5" y="553" width="52.3" height="6.5" fill="#3fae3a" opacity="0.8"/><path d="M95.5 473.5 V559.5 M147.8 473.5 V559.5" stroke="#5fd85a" stroke-width="1" opacity="0.8"/><rect x="0" y="560" width="245" height="11" fill="url(#gstrip)"/><path d="M1.5 561.5 V565" stroke="#ddd" stroke-width="0.7" opacity="0.4"/><path d="M6.7 561.5 V563.5" stroke="#ddd" stroke-width="0.7" opacity="0.4"/><path d="M11.8 561.5 V565" stroke="#ddd" stroke-width="0.7" opacity="0.4"/><path d="M17.0 561.5 V563.5" stroke="#ddd" stroke-width="0.7" opacity="0.4"/><path d="M22.1 561.5 V565" stroke="#ddd" stroke-width="0.7" opacity="0.4"/><path d="M27.2 561.5 V563.5" stroke="#ddd" stroke-width="0.7" opacity="0.4"/><path d="M32.4 561.5 V565" stroke="#ddd" stroke-width="0.7" opacity="0.4"/><path d="M37.6 561.5 V563.5" stroke="#ddd" stroke-width="0.7" opacity="0.4"/><path d="M42.7 561.5 V565" stroke="#ddd" stroke-width="0.7" opacity="0.4"/><path d="M47.9 561.5 V563.5" stroke="#ddd" stroke-width="0.7" opacity="0.4"/><path d="M53.0 561.5 V565" stroke="#ddd" stroke-width="0.7" opacity="0.4"/><path d="M58.2 561.5 V563.5" stroke="#ddd" stroke-width="0.7" opacity="0.4"/><path d="M63.3 561.5 V565" stroke="#ddd" stroke-width="0.7" opacity="0.4"/><path d="M68.5 561.5 V563.5" stroke="#ddd" stroke-width="0.7" opacity="0.4"/><path d="M73.6 561.5 V565" stroke="#ddd" stroke-width="0.7" opacity="0.4"/><path d="M78.8 561.5 V563.5" stroke="#ddd" stroke-width="0.7" opacity="0.4"/><path d="M83.9 561.5 V565" stroke="#ddd" stroke-width="0.7" opacity="0.4"/><path d="M89.1 561.5 V563.5" stroke="#ddd" stroke-width="0.7" opacity="0.4"/><path d="M94.2 561.5 V565" stroke="#ddd" stroke-width="0.7" opacity="0.4"/><path d="M99.4 561.5 V563.5" stroke="#ddd" stroke-width="0.7" opacity="0.4"/><path d="M104.5 561.5 V565" stroke="#ddd" stroke-width="0.7" opacity="0.4"/><path d="M109.7 561.5 V563.5" stroke="#ddd" stroke-width="0.7" opacity="0.4"/><path d="M114.8 561.5 V565" stroke="#ddd" stroke-width="0.7" opacity="0.4"/><path d="M120.0 561.5 V563.5" stroke="#ddd" stroke-width="0.7" opacity="0.4"/><path d="M125.1 561.5 V565" stroke="#ddd" stroke-width="0.7" opacity="0.4"/><path d="M130.2 561.5 V563.5" stroke="#ddd" stroke-width="0.7" opacity="0.4"/><path d="M135.4 561.5 V565" stroke="#ddd" stroke-width="0.7" opacity="0.4"/><path d="M140.6 561.5 V563.5" stroke="#ddd" stroke-width="0.7" opacity="0.4"/><path d="M145.7 561.5 V565" stroke="#ddd" stroke-width="0.7" opacity="0.4"/><path d="M150.9 561.5 V563.5" stroke="#ddd" stroke-width="0.7" opacity="0.4"/><path d="M156.0 561.5 V565" stroke="#ddd" stroke-width="0.7" opacity="0.4"/><path d="M161.2 561.5 V563.5" stroke="#ddd" stroke-width="0.7" opacity="0.4"/><path d="M166.3 561.5 V565" stroke="#ddd" stroke-width="0.7" opacity="0.4"/><path d="M171.5 561.5 V563.5" stroke="#ddd" stroke-width="0.7" opacity="0.4"/><path d="M176.6 561.5 V565" stroke="#ddd" stroke-width="0.7" opacity="0.4"/><path d="M181.8 561.5 V563.5" stroke="#ddd" stroke-width="0.7" opacity="0.4"/><path d="M186.9 561.5 V565" stroke="#ddd" stroke-width="0.7" opacity="0.4"/><path d="M192.1 561.5 V563.5" stroke="#ddd" stroke-width="0.7" opacity="0.4"/><path d="M197.2 561.5 V565" stroke="#ddd" stroke-width="0.7" opacity="0.4"/><path d="M202.4 561.5 V563.5" stroke="#ddd" stroke-width="0.7" opacity="0.4"/><path d="M207.5 561.5 V565" stroke="#ddd" stroke-width="0.7" opacity="0.4"/><path d="M212.7 561.5 V563.5" stroke="#ddd" stroke-width="0.7" opacity="0.4"/><path d="M217.8 561.5 V565" stroke="#ddd" stroke-width="0.7" opacity="0.4"/><path d="M223.0 561.5 V563.5" stroke="#ddd" stroke-width="0.7" opacity="0.4"/><path d="M228.1 561.5 V565" stroke="#ddd" stroke-width="0.7" opacity="0.4"/><path d="M233.3 561.5 V563.5" stroke="#ddd" stroke-width="0.7" opacity="0.4"/><path d="M238.4 561.5 V565" stroke="#ddd" stroke-width="0.7" opacity="0.4"/><path d="M243.6 561.5 V563.5" stroke="#ddd" stroke-width="0.7" opacity="0.4"/><path d="M248.7 561.5 V565" stroke="#ddd" stroke-width="0.7" opacity="0.4"/><path d="M253.9 561.5 V563.5" stroke="#ddd" stroke-width="0.7" opacity="0.4"/></svg>
<div class="t" style="left:2.0px;top:470.0px;font-size:5.17px;line-height:6px;color:#ccc;letter-spacing:-0.08px;">-30 dBm</div>
<div class="t" style="left:222.0px;top:470.0px;font-size:5.17px;line-height:6px;color:#ccc;letter-spacing:-0.08px;">-30 dBm</div>
<div class="t" style="left:2.0px;top:482.0px;font-size:5.17px;line-height:6px;color:#ccc;letter-spacing:-0.08px;">-40 dBm</div>
<div class="t" style="left:222.0px;top:482.0px;font-size:5.17px;line-height:6px;color:#ccc;letter-spacing:-0.08px;">-40 dBm</div>
<div class="t" style="left:2.0px;top:493.0px;font-size:5.17px;line-height:6px;color:#ccc;letter-spacing:-0.08px;">-50 dBm</div>
<div class="t" style="left:222.0px;top:493.0px;font-size:5.17px;line-height:6px;color:#ccc;letter-spacing:-0.08px;">-50 dBm</div>
<div class="t" style="left:2.0px;top:505.0px;font-size:5.17px;line-height:6px;color:#ccc;letter-spacing:-0.08px;">-60 dBm</div>
<div class="t" style="left:222.0px;top:505.0px;font-size:5.17px;line-height:6px;color:#ccc;letter-spacing:-0.08px;">-60 dBm</div>
<div class="t" style="left:2.0px;top:518.0px;font-size:5.17px;line-height:6px;color:#ccc;letter-spacing:-0.08px;">-70 dBm</div>
<div class="t" style="left:222.0px;top:518.0px;font-size:5.17px;line-height:6px;color:#ccc;letter-spacing:-0.08px;">-70 dBm</div>
<div class="t" style="left:2.0px;top:530.0px;font-size:5.17px;line-height:6px;color:#ccc;letter-spacing:-0.08px;">-80 dBm</div>
<div class="t" style="left:222.0px;top:530.0px;font-size:5.17px;line-height:6px;color:#ccc;letter-spacing:-0.08px;">-80 dBm</div>
<div class="t" style="left:2.0px;top:542.0px;font-size:5.17px;line-height:6px;color:#ccc;letter-spacing:-0.08px;">-90 dBm</div>
<div class="t" style="left:222.0px;top:542.0px;font-size:5.17px;line-height:6px;color:#ccc;letter-spacing:-0.08px;">-90 dBm</div>
<div class="a" style="left:0px;top:472px;width:245px;height:1.5px;background:#000;"></div>
<div class="t" style="left:80.8px;top:569.0px;font-size:9px;line-height:10px;color:#fff;letter-spacing:0.16px;">13.820</div>
<div class="t" style="left:183.9px;top:569.0px;font-size:9px;line-height:10px;color:#fff;letter-spacing:0.16px;">13.840</div>
<svg style="left:0;top:0" width="245" height="700" viewBox="0 0 245 700"><defs><filter id="fif1" x="0" y="0" width="1" height="1" color-interpolation-filters="sRGB"><feTurbulence type="fractalNoise" baseFrequency="0.5 0.012" numOctaves="3" seed="14"/><feColorMatrix type="matrix" values="0.2 0 0 0 -0.1  1.6 0 0 0 -0.6  1.8 0 0 0 0.05  0 0 0 0 1"/></filter><filter id="fif2" x="0" y="0" width="1" height="1" color-interpolation-filters="sRGB"><feTurbulence type="fractalNoise" baseFrequency="0.3 0.006" numOctaves="2" seed="41"/><feColorMatrix type="matrix" values="0 0 0 0 0  -0.2 0 0 0 1.06  2.0 0 0 0 -0.82  0 0 0 0 1"/></filter><clipPath id="cif1"><rect x="18.8" y="580" width="51.2" height="111"/></clipPath><clipPath id="cif2"><rect x="95.8" y="580" width="51.8" height="111"/></clipPath><linearGradient id="gifc" x1="0" y1="0" x2="1" y2="0"><stop offset="0" stop-color="#20e0ff" stop-opacity="0"/><stop offset="0.14" stop-color="#20e0ff" stop-opacity="0.1"/><stop offset="0.21" stop-color="#30d8ff" stop-opacity="0.75"/><stop offset="0.29" stop-color="#20e0ff" stop-opacity="0.1"/><stop offset="0.42" stop-color="#20e0ff" stop-opacity="0"/><stop offset="0.48" stop-color="#20f0d0" stop-opacity="0.45"/><stop offset="0.55" stop-color="#20e0ff" stop-opacity="0"/><stop offset="0.66" stop-color="#20e0ff" stop-opacity="0.05"/><stop offset="0.73" stop-color="#30d8ff" stop-opacity="0.7"/><stop offset="0.8" stop-color="#20e0ff" stop-opacity="0.05"/><stop offset="1" stop-color="#20e0ff" stop-opacity="0"/></linearGradient></defs><g clip-path="url(#cif1)"><rect x="10" y="575" width="70" height="120" filter="url(#fif1)"/></g><rect x="36.3" y="580" width="2.2" height="111" fill="#000" opacity="0.8"/><rect x="58.6" y="580" width="2.4" height="111" fill="#000" opacity="0.8"/><g clip-path="url(#cif2)"><rect x="90" y="575" width="64" height="120" filter="url(#fif2)"/></g><rect x="95.8" y="580" width="51.8" height="111" fill="url(#gifc)"/></svg>
<div class="a" style="left:0px;top:691px;width:245px;height:18px;background:linear-gradient(90deg,#ffffff 0%,#f4f4f4 55%,#e4e4e4 100%);"></div>
<div class="t" style="left:1.9px;top:695.0px;font-size:11.72px;line-height:14px;color:#1f70b8;font-weight:bold;letter-spacing:-0.15px;">Mode</div>
<svg style="left:232px;top:697px" width="7" height="4" viewBox="0 0 7 4"><path d="M0 4 H7 L3.5 0 Z" fill="#111"/></svg>
<div class="a" style="left:0px;top:709px;width:245px;height:183px;background:#000;"></div>
<div class="a" style="left:7px;top:719px;width:60px;height:22px;background:linear-gradient(#3d3d3d 0%,#2a2a2a 45%,#000 50%,#000 100%);border:1px solid #444;box-sizing:border-box;"></div>
<div class="t" style="left:27.2px;top:725.0px;font-size:9px;line-height:10px;color:#fff;letter-spacing:1.01px;">• • •</div>
<div class="a" style="left:71px;top:719px;width:60px;height:22px;background:linear-gradient(#3d3d3d 0%,#2a2a2a 45%,#000 50%,#000 100%);border:1px solid #444;box-sizing:border-box;"></div>
<div class="t" style="left:83.5px;top:724.0px;font-size:10.81px;line-height:12px;color:#e6e6e6;letter-spacing:-0.31px;">Step</div>
<div class="t" style="left:107.5px;top:723px;font-size:11px;line-height:14px;color:#e6e6e6;font-family:&quot;DejaVu Sans&quot;,sans-serif;">☰</div>
<div class="a" style="left:135px;top:719px;width:60px;height:22px;background:linear-gradient(#3d3d3d 0%,#2a2a2a 45%,#000 50%,#000 100%);border:1px solid #444;box-sizing:border-box;"></div>
<div class="t" style="left:156.6px;top:723.0px;font-size:11.42px;line-height:14px;color:#dcdcdc;letter-spacing:-0.17px;">AM</div>
<div class="a" style="left:7px;top:747px;width:60px;height:22px;background:linear-gradient(#3d3d3d 0%,#2a2a2a 45%,#000 50%,#000 100%);border:1px solid #444;box-sizing:border-box;"></div>
<div class="t" style="left:25.9px;top:752.0px;font-size:10.81px;line-height:12px;color:#dcdcdc;letter-spacing:-0.38px;">SAM</div>
<div class="a" style="left:71px;top:747px;width:60px;height:22px;background:linear-gradient(#3d3d3d 0%,#2a2a2a 45%,#000 50%,#000 100%);border:1px solid #444;box-sizing:border-box;"></div>
<div class="t" style="left:84.2px;top:752.0px;font-size:10.81px;line-height:12px;color:#dcdcdc;letter-spacing:-0.91px;">ECSS-L</div>
<div class="a" style="left:135px;top:747px;width:60px;height:22px;background:linear-gradient(#3d3d3d 0%,#2a2a2a 45%,#000 50%,#000 100%);border:1px solid #444;box-sizing:border-box;"></div>
<div class="t" style="left:147.3px;top:752.0px;font-size:10.81px;line-height:12px;color:#dcdcdc;letter-spacing:-0.92px;">ECSS-U</div>
<div class="a" style="left:7px;top:775px;width:60px;height:22px;background:linear-gradient(#3d3d3d 0%,#2a2a2a 45%,#000 50%,#000 100%);border:1px solid #444;box-sizing:border-box;"></div>
<div class="t" style="left:22.8px;top:780.0px;font-size:10.81px;line-height:12px;color:#dcdcdc;letter-spacing:-0.21px;">CW-U</div>
<div class="a" style="left:71px;top:775px;width:60px;height:22px;background:linear-gradient(#3d3d3d 0%,#2a2a2a 45%,#000 50%,#000 100%);border:1px solid #444;box-sizing:border-box;"></div>
<div class="t" style="left:87.7px;top:780.0px;font-size:10.81px;line-height:12px;color:#dcdcdc;letter-spacing:-0.18px;">CW-L</div>
<div class="a" style="left:135px;top:775px;width:60px;height:22px;background:linear-gradient(#3d3d3d 0%,#2a2a2a 45%,#000 50%,#000 100%);border:1px solid #444;box-sizing:border-box;"></div>
<div class="t" style="left:148.8px;top:780.0px;font-size:10.81px;line-height:12px;color:#dcdcdc;letter-spacing:-0.37px;">BC-FM</div>
<div class="a" style="left:7px;top:803px;width:60px;height:22px;background:linear-gradient(#3d3d3d 0%,#2a2a2a 45%,#000 50%,#000 100%);border:1px solid #444;box-sizing:border-box;"></div>
<div class="t" style="left:23.6px;top:807.0px;font-size:10.98px;line-height:14px;color:#dcdcdc;letter-spacing:-0.14px;">N-FM</div>
<div class="a" style="left:71px;top:803px;width:60px;height:22px;background:linear-gradient(#3d3d3d 0%,#2a2a2a 45%,#000 50%,#000 100%);border:1px solid #444;box-sizing:border-box;"></div>
<div class="t" style="left:86.3px;top:807.0px;font-size:11.1px;line-height:14px;color:#dcdcdc;letter-spacing:-0.15px;">W-FM</div>
<div class="a" style="left:135px;top:803px;width:60px;height:22px;background:linear-gradient(#3d3d3d 0%,#2a2a2a 45%,#000 50%,#000 100%);border:1px solid #444;box-sizing:border-box;"></div>
<div class="t" style="left:156.6px;top:808.0px;font-size:10.81px;line-height:12px;color:#dcdcdc;letter-spacing:-1.21px;">LSB</div>
<div class="a" style="left:7px;top:831px;width:60px;height:22px;background:linear-gradient(#3d3d3d 0%,#2a2a2a 45%,#000 50%,#000 100%);border:1px solid #444;box-sizing:border-box;"></div>
<div class="t" style="left:27.4px;top:836.0px;font-size:10.81px;line-height:12px;color:#dcdcdc;letter-spacing:-0.98px;">USB</div>
<div class="a" style="left:71px;top:831px;width:60px;height:22px;background:linear-gradient(#3d3d3d 0%,#2a2a2a 45%,#000 50%,#000 100%);border:1px solid #444;box-sizing:border-box;"></div>
<div class="t" style="left:84.0px;top:835.0px;font-size:10.95px;line-height:14px;color:#dcdcdc;letter-spacing:-0.11px;">Wide-L</div>
<div class="a" style="left:135px;top:831px;width:60px;height:22px;background:radial-gradient(ellipse 26px 7px at 50% 100%,#c8c81a 0%,#7a7a10 45%,rgba(0,0,0,0) 100%),linear-gradient(#3d3d3d 0%,#2a2a2a 45%,#000 50%,#000 100%);border:1px solid #444;box-sizing:border-box;"></div>
<div class="t" style="left:144.8px;top:835.0px;font-size:12.0px;line-height:14px;color:#fff;font-weight:bold;letter-spacing:-0.14px;">Wide-U</div>
<div class="a" style="left:7px;top:859px;width:60px;height:22px;background:linear-gradient(#3d3d3d 0%,#2a2a2a 45%,#000 50%,#000 100%);border:1px solid #444;box-sizing:border-box;"></div>
<div class="t" style="left:27.4px;top:864.0px;font-size:10.81px;line-height:12px;color:#dcdcdc;letter-spacing:-0.98px;">DSB</div>
<div class="a" style="left:0px;top:892px;width:245px;height:38px;background:linear-gradient(90deg,#ffffff 0%,#f4f4f4 55%,#e4e4e4 100%);"></div>
<div class="t" style="left:1.9px;top:896.0px;font-size:11.28px;line-height:14px;color:#1f70b8;font-weight:bold;letter-spacing:-0.35px;">Filter</div>
<svg style="left:232px;top:899px" width="7" height="4" viewBox="0 0 7 4"><path d="M0 0 H7 L3.5 4 Z" fill="#111"/></svg>
<div class="t" style="left:4.6px;top:914.0px;font-size:11.28px;line-height:14px;color:#1f70b8;font-weight:bold;letter-spacing:-0.47px;">Radio</div>
<svg style="left:232px;top:916px" width="7" height="4" viewBox="0 0 7 4"><path d="M0 4 H7 L3.5 0 Z" fill="#111"/></svg>
<div class="a" style="left:2px;top:932px;width:58px;height:24px;background:#e1e1e1;border:2px solid #0078d7;box-sizing:border-box;"></div>
<div class="t" style="left:19.5px;top:937.0px;font-size:11.0px;line-height:14px;color:#111;letter-spacing:-0.16px;-webkit-text-stroke:0.22px currentColor;">Help</div>
<div class="a" style="left:65px;top:932px;width:58px;height:24px;background:#e1e1e1;border:1px solid #adadad;box-sizing:border-box;"></div>
<div class="t" style="left:74.5px;top:937.0px;font-size:11.0px;line-height:14px;color:#111;letter-spacing:-0.13px;-webkit-text-stroke:0.22px currentColor;">Options</div>
<div class="a" style="left:1px;top:969px;width:13px;height:13px;background:#fff;border:1px solid #333;box-sizing:border-box;"></div>
<div class="t" style="left:16.4px;top:968.0px;font-size:11.0px;line-height:14px;color:#111;letter-spacing:-0.14px;-webkit-text-stroke:0.22px currentColor;">Dither</div>
<div class="a" style="left:1px;top:991.5px;width:13px;height:13px;background:#fff;border:1px solid #333;box-sizing:border-box;"></div>
<div class="t" style="left:16.4px;top:991.0px;font-size:11.0px;line-height:14px;color:#111;letter-spacing:-0.43px;-webkit-text-stroke:0.22px currentColor;">Random</div>
<div class="t" style="left:0.6px;top:1018.0px;font-size:11.0px;line-height:14px;color:#111;letter-spacing:-0.57px;-webkit-text-stroke:0.22px currentColor;">HF:</div>
<svg style="left:39.3px;top:1017px" width="14" height="14" viewBox="0 0 14 14"><circle cx="7" cy="7" r="6" fill="#fff" stroke="#333" stroke-width="1"/><circle cx="7" cy="7" r="3.2" fill="#222"/></svg>
<div class="t" style="left:55.7px;top:1018.0px;font-size:11.0px;line-height:14px;color:#111;letter-spacing:-0.53px;-webkit-text-stroke:0.22px currentColor;">0 dB</div>
<svg style="left:90px;top:1017px" width="14" height="14" viewBox="0 0 14 14"><circle cx="7" cy="7" r="6" fill="#fff" stroke="#333" stroke-width="1"/></svg>
<div class="t" style="left:107.0px;top:1018.0px;font-size:11.0px;line-height:14px;color:#111;letter-spacing:-0.40px;-webkit-text-stroke:0.22px currentColor;">-10 dB</div>
<svg style="left:153px;top:1017px" width="14" height="14" viewBox="0 0 14 14"><circle cx="7" cy="7" r="6" fill="#fff" stroke="#333" stroke-width="1"/></svg>
<div class="t" style="left:170.0px;top:1018.0px;font-size:11.0px;line-height:14px;color:#111;letter-spacing:-0.40px;-webkit-text-stroke:0.22px currentColor;">-20 dB</div>
<div class="t" style="left:0.6px;top:1044.0px;font-size:11.0px;line-height:14px;color:#111;letter-spacing:-0.76px;-webkit-text-stroke:0.22px currentColor;">VHF:</div>
<div class="a" style="left:40px;top:1042px;width:160px;height:17px;background:linear-gradient(#fafafa 0,#f0f0f0 3px);"></div>
<div class="a" style="left:165px;top:1043px;width:17px;height:15px;background:#cdcdcd;"></div>
<svg style="left:45px;top:1046.5px" width="6" height="8" viewBox="0 0 6 8"><path d="M5 0.7 L1.2 4 L5 7.3" fill="none" stroke="#555" stroke-width="1.5"/></svg>
<svg style="left:188px;top:1046.5px" width="6" height="8" viewBox="0 0 6 8"><path d="M1 0.7 L4.8 4 L1 7.3" fill="none" stroke="#555" stroke-width="1.5"/></svg>
<div class="t" style="left:205.0px;top:1044.0px;font-size:11.0px;line-height:14px;color:#111;letter-spacing:-0.37px;-webkit-text-stroke:0.22px currentColor;">28</div>
<div class="a" style="left:4px;top:1073px;width:236px;height:1px;background:#9a9a9a;"></div>
<div class="a" style="left:40px;top:1083px;width:160px;height:3px;background:#f8f8f8;"></div>
<div class="a" style="left:165px;top:1084px;width:17px;height:2px;background:#cdcdcd;"></div>
<div class="a" style="left:261px;top:136px;width:5px;height:950px;background:#eaeaf7;"></div>
<div class="a" style="left:266px;top:136px;width:1018px;height:513px;background:linear-gradient(#000 0%,#0a0a0a 35%,#151515 100%);"></div>
<div class="a" style="left:266px;top:649px;width:1018px;height:6px;background:#f0f0f0;"></div>
<div class="a" style="left:261px;top:649px;width:5px;height:6px;background:#f0f0f0;"></div>
<div class="a" style="left:266px;top:655px;width:1018px;height:403px;background:#000;"></div>
<svg style="left:0;top:0" width="1284" height="1108" viewBox="0 0 1284 1108"><defs><linearGradient id="gsp" gradientUnits="userSpaceOnUse" x1="0" y1="355" x2="0" y2="628"><stop offset="0" stop-color="#d2dc28"/><stop offset="0.14" stop-color="#a8cc20"/><stop offset="0.3" stop-color="#2fb41e"/><stop offset="0.40" stop-color="#30b264"/><stop offset="0.5" stop-color="#27a294"/><stop offset="0.6" stop-color="#2080a4"/><stop offset="0.7" stop-color="#1c44a0"/><stop offset="0.8" stop-color="#1a1e84"/><stop offset="0.9" stop-color="#16164a"/><stop offset="1" stop-color="#111124"/></linearGradient><linearGradient id="gband" x1="0" y1="0" x2="0" y2="1"><stop offset="0" stop-color="#0f860f"/><stop offset="0.45" stop-color="#127212"/><stop offset="1" stop-color="#1f4a1f"/></linearGradient><linearGradient id="gcap2" x1="0" y1="0" x2="1" y2="0"><stop offset="0" stop-color="#1fae1f"/><stop offset="0.5" stop-color="#62f062"/><stop offset="1" stop-color="#1fae1f"/></linearGradient><linearGradient id="gax" x1="0" y1="0" x2="0" y2="1"><stop offset="0" stop-color="#8f8f8f"/><stop offset="0.5" stop-color="#2c2c2c"/><stop offset="1" stop-color="#000"/></linearGradient><clipPath id="cband"><rect x="1099.5" y="138" width="72" height="490"/></clipPath></defs><path d="M320 149.0 H1284" stroke="#9a9a9a" stroke-width="1" stroke-dasharray="1.2 2.8" opacity="0.65"/><path d="M320 186.7 H1284" stroke="#9a9a9a" stroke-width="1" stroke-dasharray="1.2 2.8" opacity="0.65"/><path d="M320 224.3 H1284" stroke="#9a9a9a" stroke-width="1" stroke-dasharray="1.2 2.8" opacity="0.65"/><path d="M320 261.9 H1284" stroke="#9a9a9a" stroke-width="1" stroke-dasharray="1.2 2.8" opacity="0.65"/><path d="M320 299.6 H1284" stroke="#9a9a9a" stroke-width="1" stroke-dasharray="1.2 2.8" opacity="0.65"/><path d="M320 337.2 H1284" stroke="#9a9a9a" stroke-width="1" stroke-dasharray="1.2 2.8" opacity="0.65"/><path d="M320 374.9 H1284" stroke="#9a9a9a" stroke-width="1" stroke-dasharray="1.2 2.8" opacity="0.65"/><path d="M320 412.6 H1284" stroke="#9a9a9a" stroke-width="1" stroke-dasharray="1.2 2.8" opacity="0.65"/><path d="M320 450.2 H1284" stroke="#9a9a9a" stroke-width="1" stroke-dasharray="1.2 2.8" opacity="0.65"/><path d="M320 487.8 H1284" stroke="#9a9a9a" stroke-width="1" stroke-dasharray="1.2 2.8" opacity="0.65"/><path d="M320 525.5 H1284" stroke="#9a9a9a" stroke-width="1" stroke-dasharray="1.2 2.8" opacity="0.65"/><path d="M320 563.1 H1284" stroke="#9a9a9a" stroke-width="1" stroke-dasharray="1.2 2.8" opacity="0.65"/><path d="M320 600.8 H1284" stroke="#9a9a9a" stroke-width="1" stroke-dasharray="1.2 2.8" opacity="0.65"/><rect x="1099.5" y="138" width="72" height="490" fill="url(#gband)" opacity="0.93"/><rect x="1099.5" y="138" width="72" height="6" fill="url(#gcap2)"/><path d="M1100 174 H1171" stroke="#4fd24f" stroke-width="1.4" opacity="0.75"/><rect x="1128" y="147" width="15" height="16" fill="#0a3a0a" opacity="0.85"/><path d="M266.0 629.0 L267.5 628.9 L268.9 629.1 L270.4 630.0 L271.8 628.9 L273.3 629.0 L274.7 629.2 L276.2 628.2 L277.6 629.0 L279.1 629.3 L280.5 629.7 L282.0 629.0 L283.7 614.6 L285.5 629.0 L286.9 628.0 L288.4 628.5 L289.9 628.0 L291.3 629.7 L292.8 629.5 L294.2 624.9 L295.6 630.0 L297.1 630.0 L298.6 629.4 L300.0 629.0 L301.4 605.8 L302.9 585.0 L305.0 622.0 L306.9 623.2 L308.8 629.0 L311.0 600.0 L313.0 583.5 L314.5 585.6 L316.0 590.0 L317.5 563.9 L319.0 537.7 L321.0 560.0 L323.0 600.0 L325.7 517.0 L328.0 560.0 L329.5 576.1 L331.0 593.7 L332.5 611.6 L334.0 560.0 L336.0 528.8 L338.0 543.0 L340.0 530.0 L341.4 520.6 L342.9 512.5 L344.4 518.0 L346.0 525.8 L347.9 545.7 L349.7 565.8 L352.0 545.0 L353.8 521.9 L355.6 499.0 L357.1 514.7 L358.5 528.8 L360.2 519.2 L362.0 509.5 L364.0 545.0 L366.0 569.8 L368.0 594.0 L369.5 577.0 L371.0 560.0 L373.0 520.0 L374.8 475.5 L376.5 520.0 L378.4 561.0 L380.7 524.0 L382.0 580.0 L383.7 623.5 L385.4 628.1 L387.0 629.0 L389.0 617.0 L391.7 605.7 L394.0 585.0 L395.8 574.4 L397.6 564.0 L399.1 565.5 L400.5 569.2 L402.0 570.0 L403.5 573.1 L405.0 574.6 L406.5 576.2 L408.0 577.6 L409.5 568.4 L411.0 560.0 L413.0 546.5 L414.9 557.6 L416.9 570.0 L418.4 572.0 L420.0 575.0 L420.0 575.0 L421.2 573.3 L422.5 581.0 L423.8 579.8 L425.0 585.4 L426.2 583.4 L427.5 590.1 L428.8 591.0 L430.0 590.0 L431.2 587.1 L432.5 590.1 L433.8 597.2 L435.0 594.7 L436.2 600.3 L437.5 596.6 L438.8 595.2 L440.0 600.0 L441.3 601.8 L442.7 603.7 L444.0 600.1 L445.3 599.2 L446.7 601.9 L448.0 604.0 L449.4 609.1 L450.9 608.5 L452.4 604.3 L453.8 608.7 L455.2 608.6 L456.7 609.5 L458.1 611.2 L459.6 619.4 L461.0 619.0 L462.5 614.5 L464.0 616.0 L465.5 613.3 L467.0 612.0 L468.5 608.2 L470.0 611.4 L471.5 605.2 L473.0 607.0 L474.5 609.7 L476.0 606.8 L477.5 610.8 L479.0 613.0 L480.5 612.5 L482.0 614.8 L483.5 622.6 L485.0 620.5 L486.4 621.3 L487.8 615.5 L489.2 618.6 L490.6 611.3 L492.0 612.0 L493.3 610.1 L494.6 612.9 L495.9 610.0 L497.1 604.4 L498.4 610.9 L499.7 605.7 L501.0 604.8 L502.2 606.6 L503.5 612.4 L504.7 610.1 L506.0 613.0 L507.4 612.8 L508.8 612.4 L510.2 614.1 L511.6 619.0 L513.0 617.4 L514.3 612.3 L515.6 613.1 L517.0 610.0 L518.2 607.4 L519.5 606.6 L520.8 609.4 L522.0 604.0 L523.3 604.9 L524.7 606.6 L526.0 607.0 L527.6 609.6 L529.2 603.5 L530.8 605.7 L532.2 606.9 L533.6 617.3 L535.0 618.0 L536.6 623.5 L538.1 621.5 L539.7 629.4 L541.0 623.7 L542.3 630.0 L543.6 630.0 L544.9 623.7 L546.1 630.0 L547.4 630.0 L548.7 629.9 L550.0 629.0 L551.3 628.2 L552.7 622.3 L554.0 621.6 L555.3 630.0 L556.7 623.0 L558.0 628.0 L559.3 628.7 L560.6 621.0 L561.9 622.0 L563.0 612.0 L565.0 629.0 L566.3 630.0 L567.5 629.8 L568.8 624.3 L570.1 623.3 L571.3 630.0 L572.6 622.4 L573.9 623.7 L575.1 629.5 L576.4 630.0 L577.7 630.0 L578.9 624.2 L580.2 630.0 L581.5 623.5 L582.7 621.9 L584.0 629.0 L585.5 622.1 L587.0 621.5 L588.5 616.3 L590.0 618.0 L591.5 613.4 L593.0 613.2 L594.4 613.0 L595.9 607.5 L597.4 608.7 L599.2 609.2 L601.0 612.0 L602.5 613.3 L604.0 608.0 L605.3 616.0 L606.7 617.3 L608.0 620.0 L609.3 623.6 L610.7 624.7 L612.0 629.0 L613.2 623.0 L614.5 622.1 L615.8 622.0 L617.0 630.0 L618.2 630.0 L619.5 630.0 L620.8 622.0 L622.0 629.0 L623.5 629.1 L625.0 624.0 L626.7 616.2 L628.4 608.7 L630.0 629.0 L631.2 630.0 L632.5 624.5 L633.8 630.0 L635.0 622.4 L636.2 629.4 L637.5 630.0 L638.8 630.0 L640.0 629.0 L641.2 630.0 L642.5 629.4 L643.8 629.5 L645.0 629.8 L646.2 621.4 L647.5 623.6 L648.8 624.7 L650.0 623.8 L651.2 619.3 L652.5 621.8 L653.8 621.7 L655.0 618.0 L656.4 617.4 L657.8 616.6 L659.2 613.4 L660.6 613.9 L662.0 612.0 L663.5 613.9 L665.0 610.5 L666.5 616.2 L668.0 616.0 L669.3 619.1 L670.7 617.2 L672.0 614.9 L673.3 611.1 L674.7 613.0 L676.0 610.0 L677.3 611.5 L678.7 611.2 L680.0 615.3 L681.3 609.8 L682.7 616.3 L684.0 615.0 L685.3 610.4 L686.7 614.5 L688.0 612.8 L689.3 610.1 L690.7 613.3 L692.0 611.0 L693.3 612.8 L694.7 615.6 L696.0 620.0 L697.3 616.3 L698.7 616.1 L700.0 622.0 L701.5 621.3 L703.0 628.5 L704.5 622.5 L706.0 629.0 L707.2 623.2 L708.5 630.0 L709.8 630.0 L711.0 628.5 L712.2 630.0 L713.5 624.5 L714.8 630.0 L716.0 629.0 L717.5 621.5 L719.0 621.4 L720.5 622.6 L722.0 618.0 L723.2 622.5 L724.5 623.2 L725.8 620.0 L727.0 622.0 L728.2 623.7 L729.5 622.5 L730.8 621.9 L732.0 629.0 L733.3 629.0 L734.6 630.0 L735.9 630.0 L737.1 630.0 L738.4 630.0 L739.7 624.1 L741.0 623.2 L742.3 628.6 L743.6 624.1 L744.9 623.6 L746.1 628.3 L747.4 630.0 L748.7 628.9 L750.0 629.0 L751.3 623.4 L752.7 629.8 L754.0 630.0 L755.3 621.6 L756.7 617.4 L758.0 620.0 L759.5 614.3 L761.0 619.6 L762.5 610.9 L764.0 613.0 L765.5 616.0 L767.0 616.1 L768.5 615.1 L770.0 618.0 L771.3 619.4 L772.7 612.0 L774.0 611.9 L775.3 613.6 L776.7 609.0 L778.0 612.0 L779.3 615.6 L780.7 611.5 L782.0 611.5 L783.3 611.5 L784.7 617.3 L786.0 617.0 L787.5 618.3 L789.0 621.6 L790.5 623.6 L792.0 624.0 L793.3 629.9 L794.7 630.0 L796.0 629.5 L797.3 622.8 L798.7 628.5 L800.0 629.0 L801.5 622.3 L803.0 619.9 L804.5 622.8 L806.0 622.0 L807.5 622.0 L809.0 615.8 L810.5 614.8 L812.0 615.0 L813.5 615.0 L815.0 619.2 L816.5 618.9 L818.0 620.0 L819.5 622.5 L821.0 628.2 L822.5 623.6 L824.0 629.0 L825.3 630.0 L826.7 630.0 L828.0 620.5 L829.3 630.0 L830.7 624.5 L832.0 622.0 L833.5 616.4 L835.0 616.6 L836.5 615.6 L838.0 612.0 L839.3 614.8 L840.7 609.6 L842.0 610.6 L843.3 612.5 L844.7 611.2 L846.0 608.0 L847.5 612.5 L849.0 609.2 L850.5 611.5 L852.0 611.0 L853.5 606.8 L855.0 609.4 L856.5 608.4 L858.0 604.0 L859.3 606.0 L860.7 607.5 L862.0 604.1 L863.3 610.7 L864.7 612.2 L866.0 609.0 L867.3 611.8 L868.7 607.0 L870.0 607.9 L871.3 602.8 L872.7 606.6 L874.0 602.0 L875.3 605.8 L876.7 602.4 L878.0 601.0 L879.3 604.8 L880.7 606.6 L882.0 607.0 L883.3 608.6 L884.7 605.6 L886.0 601.0 L887.3 606.9 L888.7 600.0 L890.0 603.0 L891.5 604.3 L893.0 597.8 L894.5 597.9 L896.0 598.0 L897.3 599.1 L898.7 592.3 L900.0 594.0 L901.5 588.8 L903.0 589.6 L904.5 589.1 L906.0 585.0 L907.5 584.6 L909.0 580.1 L910.5 579.0 L912.0 572.0 L913.5 579.3 L914.9 590.4 L916.4 594.0 L918.2 588.5 L920.0 590.0 L921.3 590.7 L922.7 596.2 L924.0 599.0 L925.5 602.7 L927.0 610.0 L928.5 617.4 L930.0 621.0 L931.5 624.2 L932.9 628.2 L934.4 630.0 L935.7 630.0 L937.0 630.0 L938.3 628.4 L939.6 629.0 L940.9 630.0 L942.2 630.0 L943.5 624.5 L944.8 630.0 L946.1 630.0 L947.4 630.0 L948.7 630.0 L950.0 630.0 L951.2 624.4 L952.5 630.0 L953.8 629.7 L955.0 630.0 L956.2 622.4 L957.5 630.0 L958.8 629.3 L960.0 629.0 L961.3 628.3 L962.7 630.0 L964.0 629.9 L965.3 629.4 L966.7 630.0 L968.0 623.0 L969.3 630.0 L970.7 629.2 L972.0 630.0 L973.4 630.0 L974.8 630.0 L974.8 630.0 L976.5 605.0 L978.5 590.0 L980.7 579.4 L982.0 572.0 L983.7 566.0 L986.0 575.0 L987.9 578.4 L989.7 579.4 L991.5 560.0 L993.0 500.0 L994.2 471.8 L996.5 480.0 L998.7 486.7 L1001.0 475.0 L1003.2 468.8 L1005.5 495.0 L1007.0 515.0 L1009.0 531.6 L1011.0 540.0 L1013.6 543.5 L1015.0 560.0 L1016.6 575.0 L1018.0 545.0 L1020.0 500.0 L1022.0 479.0 L1023.5 492.0 L1025.6 498.7 L1028.0 490.0 L1029.8 486.2 L1031.6 483.7 L1033.5 494.0 L1035.0 504.7 L1037.0 482.0 L1039.0 468.8 L1041.0 495.0 L1043.0 519.6 L1044.5 508.0 L1046.5 503.0 L1048.5 530.0 L1051.0 552.5 L1053.0 535.0 L1055.5 516.6 L1057.5 498.0 L1060.0 480.7 L1061.5 482.8 L1063.0 485.0 L1064.0 560.0 L1064.5 630.0 L1066.2 628.5 L1068.0 629.0 L1070.0 623.8 L1072.0 622.0 L1073.5 616.4 L1075.0 609.0 L1077.0 616.0 L1079.4 621.0 L1081.5 616.0 L1084.0 613.8 L1085.5 619.0 L1087.0 622.0 L1088.5 623.6 L1089.9 624.8 L1091.4 630.0 L1093.2 628.6 L1095.0 629.0 L1097.0 628.3 L1098.9 624.0 L1100.0 600.0 L1100.0 600.0 L1100.4 399.0 L1102.0 385.0 L1104.0 370.0 L1105.7 361.8 L1107.5 378.0 L1109.3 390.0 L1111.0 400.0 L1113.0 425.0 L1115.0 455.0 L1116.8 468.8 L1118.0 450.0 L1119.5 420.0 L1121.0 395.0 L1122.8 384.0 L1124.5 382.0 L1126.7 378.0 L1128.5 384.0 L1130.0 393.0 L1131.5 396.2 L1133.0 398.0 L1134.5 398.4 L1136.0 400.0 L1138.0 390.0 L1140.7 364.7 L1142.0 380.0 L1142.8 390.0 L1144.5 385.0 L1145.8 382.7 L1147.5 386.0 L1148.8 390.0 L1150.5 375.0 L1152.0 360.0 L1153.0 375.0 L1154.0 387.0 L1155.5 377.0 L1156.6 369.0 L1158.0 380.0 L1159.6 390.0 L1162.0 385.0 L1163.8 381.0 L1166.0 385.0 L1167.6 387.0 L1169.5 388.0 L1170.6 390.0 L1171.3 500.0 L1171.5 603.0 L1171.5 603.0 L1173.6 603.0 L1175.3 602.2 L1177.0 598.0 L1178.3 593.8 L1179.7 593.5 L1181.0 594.0 L1182.3 593.4 L1183.7 597.1 L1185.0 597.0 L1186.8 592.9 L1188.6 591.0 L1191.0 603.0 L1192.8 608.1 L1194.6 615.0 L1197.0 612.0 L1199.0 621.0 L1200.5 617.2 L1202.0 612.0 L1203.5 606.6 L1205.0 606.0 L1206.3 608.4 L1207.7 605.7 L1209.0 609.0 L1210.7 607.1 L1212.3 603.5 L1214.0 603.0 L1215.3 598.9 L1216.7 598.5 L1218.0 596.0 L1219.7 592.0 L1221.3 587.9 L1223.0 585.0 L1225.5 592.0 L1227.5 597.0 L1229.5 586.0 L1231.0 577.0 L1233.0 600.0 L1235.0 615.0 L1236.5 617.0 L1238.0 620.0 L1239.5 622.5 L1240.9 622.6 L1242.4 630.0 L1245.0 623.0 L1247.0 620.0 L1248.5 621.7 L1250.0 630.0 L1251.3 630.0 L1252.7 630.0 L1254.0 630.0 L1255.3 630.0 L1256.7 630.0 L1258.0 630.0 L1259.3 628.4 L1260.7 630.0 L1262.0 630.0 L1263.3 630.0 L1264.7 630.0 L1266.0 628.0 L1267.3 624.6 L1268.7 628.2 L1270.0 630.0 L1271.7 630.0 L1273.3 628.3 L1275.0 630.0 L1276.5 630.0 L1278.0 624.0 L1279.5 630.0 L1281.0 630.0 L1282.5 624.8 L1284.0 630.0 L1284 630 L266 630 Z" fill="url(#gsp)"/><path d="M266.0 629.0 L267.5 628.9 L268.9 629.1 L270.4 630.0 L271.8 628.9 L273.3 629.0 L274.7 629.2 L276.2 628.2 L277.6 629.0 L279.1 629.3 L280.5 629.7 L282.0 629.0 L283.7 614.6 L285.5 629.0 L286.9 628.0 L288.4 628.5 L289.9 628.0 L291.3 629.7 L292.8 629.5 L294.2 624.9 L295.6 630.0 L297.1 630.0 L298.6 629.4 L300.0 629.0 L301.4 605.8 L302.9 585.0 L305.0 622.0 L306.9 623.2 L308.8 629.0 L311.0 600.0 L313.0 583.5 L314.5 585.6 L316.0 590.0 L317.5 563.9 L319.0 537.7 L321.0 560.0 L323.0 600.0 L325.7 517.0 L328.0 560.0 L329.5 576.1 L331.0 593.7 L332.5 611.6 L334.0 560.0 L336.0 528.8 L338.0 543.0 L340.0 530.0 L341.4 520.6 L342.9 512.5 L344.4 518.0 L346.0 525.8 L347.9 545.7 L349.7 565.8 L352.0 545.0 L353.8 521.9 L355.6 499.0 L357.1 514.7 L358.5 528.8 L360.2 519.2 L362.0 509.5 L364.0 545.0 L366.0 569.8 L368.0 594.0 L369.5 577.0 L371.0 560.0 L373.0 520.0 L374.8 475.5 L376.5 520.0 L378.4 561.0 L380.7 524.0 L382.0 580.0 L383.7 623.5 L385.4 628.1 L387.0 629.0 L389.0 617.0 L391.7 605.7 L394.0 585.0 L395.8 574.4 L397.6 564.0 L399.1 565.5 L400.5 569.2 L402.0 570.0 L403.5 573.1 L405.0 574.6 L406.5 576.2 L408.0 577.6 L409.5 568.4 L411.0 560.0 L413.0 546.5 L414.9 557.6 L416.9 570.0 L418.4 572.0 L420.0 575.0 L420.0 575.0 L421.2 573.3 L422.5 581.0 L423.8 579.8 L425.0 585.4 L426.2 583.4 L427.5 590.1 L428.8 591.0 L430.0 590.0 L431.2 587.1 L432.5 590.1 L433.8 597.2 L435.0 594.7 L436.2 600.3 L437.5 596.6 L438.8 595.2 L440.0 600.0 L441.3 601.8 L442.7 603.7 L444.0 600.1 L445.3 599.2 L446.7 601.9 L448.0 604.0 L449.4 609.1 L450.9 608.5 L452.4 604.3 L453.8 608.7 L455.2 608.6 L456.7 609.5 L458.1 611.2 L459.6 619.4 L461.0 619.0 L462.5 614.5 L464.0 616.0 L465.5 613.3 L467.0 612.0 L468.5 608.2 L470.0 611.4 L471.5 605.2 L473.0 607.0 L474.5 609.7 L476.0 606.8 L477.5 610.8 L479.0 613.0 L480.5 612.5 L482.0 614.8 L483.5 622.6 L485.0 620.5 L486.4 621.3 L487.8 615.5 L489.2 618.6 L490.6 611.3 L492.0 612.0 L493.3 610.1 L494.6 612.9 L495.9 610.0 L497.1 604.4 L498.4 610.9 L499.7 605.7 L501.0 604.8 L502.2 606.6 L503.5 612.4 L504.7 610.1 L506.0 613.0 L507.4 612.8 L508.8 612.4 L510.2 614.1 L511.6 619.0 L513.0 617.4 L514.3 612.3 L515.6 613.1 L517.0 610.0 L518.2 607.4 L519.5 606.6 L520.8 609.4 L522.0 604.0 L523.3 604.9 L524.7 606.6 L526.0 607.0 L527.6 609.6 L529.2 603.5 L530.8 605.7 L532.2 606.9 L533.6 617.3 L535.0 618.0 L536.6 623.5 L538.1 621.5 L539.7 629.4 L541.0 623.7 L542.3 630.0 L543.6 630.0 L544.9 623.7 L546.1 630.0 L547.4 630.0 L548.7 629.9 L550.0 629.0 L551.3 628.2 L552.7 622.3 L554.0 621.6 L555.3 630.0 L556.7 623.0 L558.0 628.0 L559.3 628.7 L560.6 621.0 L561.9 622.0 L563.0 612.0 L565.0 629.0 L566.3 630.0 L567.5 629.8 L568.8 624.3 L570.1 623.3 L571.3 630.0 L572.6 622.4 L573.9 623.7 L575.1 629.5 L576.4 630.0 L577.7 630.0 L578.9 624.2 L580.2 630.0 L581.5 623.5 L582.7 621.9 L584.0 629.0 L585.5 622.1 L587.0 621.5 L588.5 616.3 L590.0 618.0 L591.5 613.4 L593.0 613.2 L594.4 613.0 L595.9 607.5 L597.4 608.7 L599.2 609.2 L601.0 612.0 L602.5 613.3 L604.0 608.0 L605.3 616.0 L606.7 617.3 L608.0 620.0 L609.3 623.6 L610.7 624.7 L612.0 629.0 L613.2 623.0 L614.5 622.1 L615.8 622.0 L617.0 630.0 L618.2 630.0 L619.5 630.0 L620.8 622.0 L622.0 629.0 L623.5 629.1 L625.0 624.0 L626.7 616.2 L628.4 608.7 L630.0 629.0 L631.2 630.0 L632.5 624.5 L633.8 630.0 L635.0 622.4 L636.2 629.4 L637.5 630.0 L638.8 630.0 L640.0 629.0 L641.2 630.0 L642.5 629.4 L643.8 629.5 L645.0 629.8 L646.2 621.4 L647.5 623.6 L648.8 624.7 L650.0 623.8 L651.2 619.3 L652.5 621.8 L653.8 621.7 L655.0 618.0 L656.4 617.4 L657.8 616.6 L659.2 613.4 L660.6 613.9 L662.0 612.0 L663.5 613.9 L665.0 610.5 L666.5 616.2 L668.0 616.0 L669.3 619.1 L670.7 617.2 L672.0 614.9 L673.3 611.1 L674.7 613.0 L676.0 610.0 L677.3 611.5 L678.7 611.2 L680.0 615.3 L681.3 609.8 L682.7 616.3 L684.0 615.0 L685.3 610.4 L686.7 614.5 L688.0 612.8 L689.3 610.1 L690.7 613.3 L692.0 611.0 L693.3 612.8 L694.7 615.6 L696.0 620.0 L697.3 616.3 L698.7 616.1 L700.0 622.0 L701.5 621.3 L703.0 628.5 L704.5 622.5 L706.0 629.0 L707.2 623.2 L708.5 630.0 L709.8 630.0 L711.0 628.5 L712.2 630.0 L713.5 624.5 L714.8 630.0 L716.0 629.0 L717.5 621.5 L719.0 621.4 L720.5 622.6 L722.0 618.0 L723.2 622.5 L724.5 623.2 L725.8 620.0 L727.0 622.0 L728.2 623.7 L729.5 622.5 L730.8 621.9 L732.0 629.0 L733.3 629.0 L734.6 630.0 L735.9 630.0 L737.1 630.0 L738.4 630.0 L739.7 624.1 L741.0 623.2 L742.3 628.6 L743.6 624.1 L744.9 623.6 L746.1 628.3 L747.4 630.0 L748.7 628.9 L750.0 629.0 L751.3 623.4 L752.7 629.8 L754.0 630.0 L755.3 621.6 L756.7 617.4 L758.0 620.0 L759.5 614.3 L761.0 619.6 L762.5 610.9 L764.0 613.0 L765.5 616.0 L767.0 616.1 L768.5 615.1 L770.0 618.0 L771.3 619.4 L772.7 612.0 L774.0 611.9 L775.3 613.6 L776.7 609.0 L778.0 612.0 L779.3 615.6 L780.7 611.5 L782.0 611.5 L783.3 611.5 L784.7 617.3 L786.0 617.0 L787.5 618.3 L789.0 621.6 L790.5 623.6 L792.0 624.0 L793.3 629.9 L794.7 630.0 L796.0 629.5 L797.3 622.8 L798.7 628.5 L800.0 629.0 L801.5 622.3 L803.0 619.9 L804.5 622.8 L806.0 622.0 L807.5 622.0 L809.0 615.8 L810.5 614.8 L812.0 615.0 L813.5 615.0 L815.0 619.2 L816.5 618.9 L818.0 620.0 L819.5 622.5 L821.0 628.2 L822.5 623.6 L824.0 629.0 L825.3 630.0 L826.7 630.0 L828.0 620.5 L829.3 630.0 L830.7 624.5 L832.0 622.0 L833.5 616.4 L835.0 616.6 L836.5 615.6 L838.0 612.0 L839.3 614.8 L840.7 609.6 L842.0 610.6 L843.3 612.5 L844.7 611.2 L846.0 608.0 L847.5 612.5 L849.0 609.2 L850.5 611.5 L852.0 611.0 L853.5 606.8 L855.0 609.4 L856.5 608.4 L858.0 604.0 L859.3 606.0 L860.7 607.5 L862.0 604.1 L863.3 610.7 L864.7 612.2 L866.0 609.0 L867.3 611.8 L868.7 607.0 L870.0 607.9 L871.3 602.8 L872.7 606.6 L874.0 602.0 L875.3 605.8 L876.7 602.4 L878.0 601.0 L879.3 604.8 L880.7 606.6 L882.0 607.0 L883.3 608.6 L884.7 605.6 L886.0 601.0 L887.3 606.9 L888.7 600.0 L890.0 603.0 L891.5 604.3 L893.0 597.8 L894.5 597.9 L896.0 598.0 L897.3 599.1 L898.7 592.3 L900.0 594.0 L901.5 588.8 L903.0 589.6 L904.5 589.1 L906.0 585.0 L907.5 584.6 L909.0 580.1 L910.5 579.0 L912.0 572.0 L913.5 579.3 L914.9 590.4 L916.4 594.0 L918.2 588.5 L920.0 590.0 L921.3 590.7 L922.7 596.2 L924.0 599.0 L925.5 602.7 L927.0 610.0 L928.5 617.4 L930.0 621.0 L931.5 624.2 L932.9 628.2 L934.4 630.0 L935.7 630.0 L937.0 630.0 L938.3 628.4 L939.6 629.0 L940.9 630.0 L942.2 630.0 L943.5 624.5 L944.8 630.0 L946.1 630.0 L947.4 630.0 L948.7 630.0 L950.0 630.0 L951.2 624.4 L952.5 630.0 L953.8 629.7 L955.0 630.0 L956.2 622.4 L957.5 630.0 L958.8 629.3 L960.0 629.0 L961.3 628.3 L962.7 630.0 L964.0 629.9 L965.3 629.4 L966.7 630.0 L968.0 623.0 L969.3 630.0 L970.7 629.2 L972.0 630.0 L973.4 630.0 L974.8 630.0 L974.8 630.0 L976.5 605.0 L978.5 590.0 L980.7 579.4 L982.0 572.0 L983.7 566.0 L986.0 575.0 L987.9 578.4 L989.7 579.4 L991.5 560.0 L993.0 500.0 L994.2 471.8 L996.5 480.0 L998.7 486.7 L1001.0 475.0 L1003.2 468.8 L1005.5 495.0 L1007.0 515.0 L1009.0 531.6 L1011.0 540.0 L1013.6 543.5 L1015.0 560.0 L1016.6 575.0 L1018.0 545.0 L1020.0 500.0 L1022.0 479.0 L1023.5 492.0 L1025.6 498.7 L1028.0 490.0 L1029.8 486.2 L1031.6 483.7 L1033.5 494.0 L1035.0 504.7 L1037.0 482.0 L1039.0 468.8 L1041.0 495.0 L1043.0 519.6 L1044.5 508.0 L1046.5 503.0 L1048.5 530.0 L1051.0 552.5 L1053.0 535.0 L1055.5 516.6 L1057.5 498.0 L1060.0 480.7 L1061.5 482.8 L1063.0 485.0 L1064.0 560.0 L1064.5 630.0 L1066.2 628.5 L1068.0 629.0 L1070.0 623.8 L1072.0 622.0 L1073.5 616.4 L1075.0 609.0 L1077.0 616.0 L1079.4 621.0 L1081.5 616.0 L1084.0 613.8 L1085.5 619.0 L1087.0 622.0 L1088.5 623.6 L1089.9 624.8 L1091.4 630.0 L1093.2 628.6 L1095.0 629.0 L1097.0 628.3 L1098.9 624.0 L1100.0 600.0 L1100.0 600.0 L1100.4 399.0 L1102.0 385.0 L1104.0 370.0 L1105.7 361.8 L1107.5 378.0 L1109.3 390.0 L1111.0 400.0 L1113.0 425.0 L1115.0 455.0 L1116.8 468.8 L1118.0 450.0 L1119.5 420.0 L1121.0 395.0 L1122.8 384.0 L1124.5 382.0 L1126.7 378.0 L1128.5 384.0 L1130.0 393.0 L1131.5 396.2 L1133.0 398.0 L1134.5 398.4 L1136.0 400.0 L1138.0 390.0 L1140.7 364.7 L1142.0 380.0 L1142.8 390.0 L1144.5 385.0 L1145.8 382.7 L1147.5 386.0 L1148.8 390.0 L1150.5 375.0 L1152.0 360.0 L1153.0 375.0 L1154.0 387.0 L1155.5 377.0 L1156.6 369.0 L1158.0 380.0 L1159.6 390.0 L1162.0 385.0 L1163.8 381.0 L1166.0 385.0 L1167.6 387.0 L1169.5 388.0 L1170.6 390.0 L1171.3 500.0 L1171.5 603.0 L1171.5 603.0 L1173.6 603.0 L1175.3 602.2 L1177.0 598.0 L1178.3 593.8 L1179.7 593.5 L1181.0 594.0 L1182.3 593.4 L1183.7 597.1 L1185.0 597.0 L1186.8 592.9 L1188.6 591.0 L1191.0 603.0 L1192.8 608.1 L1194.6 615.0 L1197.0 612.0 L1199.0 621.0 L1200.5 617.2 L1202.0 612.0 L1203.5 606.6 L1205.0 606.0 L1206.3 608.4 L1207.7 605.7 L1209.0 609.0 L1210.7 607.1 L1212.3 603.5 L1214.0 603.0 L1215.3 598.9 L1216.7 598.5 L1218.0 596.0 L1219.7 592.0 L1221.3 587.9 L1223.0 585.0 L1225.5 592.0 L1227.5 597.0 L1229.5 586.0 L1231.0 577.0 L1233.0 600.0 L1235.0 615.0 L1236.5 617.0 L1238.0 620.0 L1239.5 622.5 L1240.9 622.6 L1242.4 630.0 L1245.0 623.0 L1247.0 620.0 L1248.5 621.7 L1250.0 630.0 L1251.3 630.0 L1252.7 630.0 L1254.0 630.0 L1255.3 630.0 L1256.7 630.0 L1258.0 630.0 L1259.3 628.4 L1260.7 630.0 L1262.0 630.0 L1263.3 630.0 L1264.7 630.0 L1266.0 628.0 L1267.3 624.6 L1268.7 628.2 L1270.0 630.0 L1271.7 630.0 L1273.3 628.3 L1275.0 630.0 L1276.5 630.0 L1278.0 624.0 L1279.5 630.0 L1281.0 630.0 L1282.5 624.8 L1284.0 630.0" fill="none" stroke="#d8dae8" stroke-width="1.5" stroke-linejoin="round"/><rect x="1099.5" y="400" width="72" height="228" fill="#28a028" opacity="0.14"/><rect x="1099.5" y="620" width="72" height="7.5" fill="#49b83f" opacity="0.85"/><path d="M1100 138 V628 M1171.5 138 V628" stroke="#7be37b" stroke-width="1.2" opacity="0.75"/><rect x="266" y="628" width="1018" height="10" fill="url(#gax)"/><rect x="266" y="638" width="1018" height="11" fill="#000"/><path d="M268.6 629 V631.5" stroke="#e8e8e8" stroke-width="1" opacity="0.45"/><path d="M275.7 629 V633" stroke="#e8e8e8" stroke-width="1" opacity="0.45"/><path d="M282.9 629 V631.5" stroke="#e8e8e8" stroke-width="1" opacity="0.45"/><path d="M290.0 629 V631.5" stroke="#e8e8e8" stroke-width="1" opacity="0.45"/><path d="M297.2 629 V631.5" stroke="#e8e8e8" stroke-width="1" opacity="0.45"/><path d="M304.3 629 V631.5" stroke="#e8e8e8" stroke-width="1" opacity="0.45"/><path d="M311.5 629 V635" stroke="#e8e8e8" stroke-width="1" opacity="0.45"/><path d="M318.6 629 V631.5" stroke="#e8e8e8" stroke-width="1" opacity="0.45"/><path d="M325.8 629 V631.5" stroke="#e8e8e8" stroke-width="1" opacity="0.45"/><path d="M332.9 629 V631.5" stroke="#e8e8e8" stroke-width="1" opacity="0.45"/><path d="M340.1 629 V631.5" stroke="#e8e8e8" stroke-width="1" opacity="0.45"/><path d="M347.2 629 V633" stroke="#e8e8e8" stroke-width="1" opacity="0.45"/><path d="M354.4 629 V631.5" stroke="#e8e8e8" stroke-width="1" opacity="0.45"/><path d="M361.5 629 V631.5" stroke="#e8e8e8" stroke-width="1" opacity="0.45"/><path d="M368.7 629 V631.5" stroke="#e8e8e8" stroke-width="1" opacity="0.45"/><path d="M375.8 629 V631.5" stroke="#e8e8e8" stroke-width="1" opacity="0.45"/><path d="M383.0 629 V635" stroke="#e8e8e8" stroke-width="1" opacity="0.45"/><path d="M390.1 629 V631.5" stroke="#e8e8e8" stroke-width="1" opacity="0.45"/><path d="M397.3 629 V631.5" stroke="#e8e8e8" stroke-width="1" opacity="0.45"/><path d="M404.4 629 V631.5" stroke="#e8e8e8" stroke-width="1" opacity="0.45"/><path d="M411.6 629 V631.5" stroke="#e8e8e8" stroke-width="1" opacity="0.45"/><path d="M418.7 629 V633" stroke="#e8e8e8" stroke-width="1" opacity="0.45"/><path d="M425.9 629 V631.5" stroke="#e8e8e8" stroke-width="1" opacity="0.45"/><path d="M433.0 629 V631.5" stroke="#e8e8e8" stroke-width="1" opacity="0.45"/><path d="M440.2 629 V631.5" stroke="#e8e8e8" stroke-width="1" opacity="0.45"/><path d="M447.3 629 V631.5" stroke="#e8e8e8" stroke-width="1" opacity="0.45"/><path d="M454.5 629 V635" stroke="#e8e8e8" stroke-width="1" opacity="0.45"/><path d="M461.6 629 V631.5" stroke="#e8e8e8" stroke-width="1" opacity="0.45"/><path d="M468.8 629 V631.5" stroke="#e8e8e8" stroke-width="1" opacity="0.45"/><path d="M475.9 629 V631.5" stroke="#e8e8e8" stroke-width="1" opacity="0.45"/><path d="M483.1 629 V631.5" stroke="#e8e8e8" stroke-width="1" opacity="0.45"/><path d="M490.2 629 V633" stroke="#e8e8e8" stroke-width="1" opacity="0.45"/><path d="M497.4 629 V631.5" stroke="#e8e8e8" stroke-width="1" opacity="0.45"/><path d="M504.5 629 V631.5" stroke="#e8e8e8" stroke-width="1" opacity="0.45"/><path d="M511.7 629 V631.5" stroke="#e8e8e8" stroke-width="1" opacity="0.45"/><path d="M518.8 629 V631.5" stroke="#e8e8e8" stroke-width="1" opacity="0.45"/><path d="M526.0 629 V635" stroke="#e8e8e8" stroke-width="1" opacity="0.45"/><path d="M533.1 629 V631.5" stroke="#e8e8e8" stroke-width="1" opacity="0.45"/><path d="M540.3 629 V631.5" stroke="#e8e8e8" stroke-width="1" opacity="0.45"/><path d="M547.4 629 V631.5" stroke="#e8e8e8" stroke-width="1" opacity="0.45"/><path d="M554.6 629 V631.5" stroke="#e8e8e8" stroke-width="1" opacity="0.45"/><path d="M561.7 629 V633" stroke="#e8e8e8" stroke-width="1" opacity="0.45"/><path d="M568.9 629 V631.5" stroke="#e8e8e8" stroke-width="1" opacity="0.45"/><path d="M576.0 629 V631.5" stroke="#e8e8e8" stroke-width="1" opacity="0.45"/><path d="M583.2 629 V631.5" stroke="#e8e8e8" stroke-width="1" opacity="0.45"/><path d="M590.3 629 V631.5" stroke="#e8e8e8" stroke-width="1" opacity="0.45"/><path d="M597.5 629 V635" stroke="#e8e8e8" stroke-width="1" opacity="0.45"/><path d="M604.6 629 V631.5" stroke="#e8e8e8" stroke-width="1" opacity="0.45"/><path d="M611.8 629 V631.5" stroke="#e8e8e8" stroke-width="1" opacity="0.45"/><path d="M618.9 629 V631.5" stroke="#e8e8e8" stroke-width="1" opacity="0.45"/><path d="M626.1 629 V631.5" stroke="#e8e8e8" stroke-width="1" opacity="0.45"/><path d="M633.2 629 V633" stroke="#e8e8e8" stroke-width="1" opacity="0.45"/><path d="M640.4 629 V631.5" stroke="#e8e8e8" stroke-width="1" opacity="0.45"/><path d="M647.5 629 V631.5" stroke="#e8e8e8" stroke-width="1" opacity="0.45"/><path d="M654.7 629 V631.5" stroke="#e8e8e8" stroke-width="1" opacity="0.45"/><path d="M661.8 629 V631.5" stroke="#e8e8e8" stroke-width="1" opacity="0.45"/><path d="M669.0 629 V635" stroke="#e8e8e8" stroke-width="1" opacity="0.45"/><path d="M676.1 629 V631.5" stroke="#e8e8e8" stroke-width="1" opacity="0.45"/><path d="M683.3 629 V631.5" stroke="#e8e8e8" stroke-width="1" opacity="0.45"/><path d="M690.4 629 V631.5" stroke="#e8e8e8" stroke-width="1" opacity="0.45"/><path d="M697.6 629 V631.5" stroke="#e8e8e8" stroke-width="1" opacity="0.45"/><path d="M704.7 629 V633" stroke="#e8e8e8" stroke-width="1" opacity="0.45"/><path d="M711.9 629 V631.5" stroke="#e8e8e8" stroke-width="1" opacity="0.45"/><path d="M719.0 629 V631.5" stroke="#e8e8e8" stroke-width="1" opacity="0.45"/><path d="M726.2 629 V631.5" stroke="#e8e8e8" stroke-width="1" opacity="0.45"/><path d="M733.3 629 V631.5" stroke="#e8e8e8" stroke-width="1" opacity="0.45"/><path d="M740.5 629 V635" stroke="#e8e8e8" stroke-width="1" opacity="0.45"/><path d="M747.6 629 V631.5" stroke="#e8e8e8" stroke-width="1" opacity="0.45"/><path d="M754.8 629 V631.5" stroke="#e8e8e8" stroke-width="1" opacity="0.45"/><path d="M761.9 629 V631.5" stroke="#e8e8e8" stroke-width="1" opacity="0.45"/><path d="M769.1 629 V631.5" stroke="#e8e8e8" stroke-width="1" opacity="0.45"/><path d="M776.2 629 V633" stroke="#e8e8e8" stroke-width="1" opacity="0.45"/><path d="M783.4 629 V631.5" stroke="#e8e8e8" stroke-width="1" opacity="0.45"/><path d="M790.5 629 V631.5" stroke="#e8e8e8" stroke-width="1" opacity="0.45"/><path d="M797.7 629 V631.5" stroke="#e8e8e8" stroke-width="1" opacity="0.45"/><path d="M804.8 629 V631.5" stroke="#e8e8e8" stroke-width="1" opacity="0.45"/><path d="M812.0 629 V635" stroke="#e8e8e8" stroke-width="1" opacity="0.45"/><path d="M819.1 629 V631.5" stroke="#e8e8e8" stroke-width="1" opacity="0.45"/><path d="M826.3 629 V631.5" stroke="#e8e8e8" stroke-width="1" opacity="0.45"/><path d="M833.4 629 V631.5" stroke="#e8e8e8" stroke-width="1" opacity="0.45"/><path d="M840.6 629 V631.5" stroke="#e8e8e8" stroke-width="1" opacity="0.45"/><path d="M847.7 629 V633" stroke="#e8e8e8" stroke-width="1" opacity="0.45"/><path d="M854.9 629 V631.5" stroke="#e8e8e8" stroke-width="1" opacity="0.45"/><path d="M862.0 629 V631.5" stroke="#e8e8e8" stroke-width="1" opacity="0.45"/><path d="M869.2 629 V631.5" stroke="#e8e8e8" stroke-width="1" opacity="0.45"/><path d="M876.3 629 V631.5" stroke="#e8e8e8" stroke-width="1" opacity="0.45"/><path d="M883.5 629 V635" stroke="#e8e8e8" stroke-width="1" opacity="0.45"/><path d="M890.6 629 V631.5" stroke="#e8e8e8" stroke-width="1" opacity="0.45"/><path d="M897.8 629 V631.5" stroke="#e8e8e8" stroke-width="1" opacity="0.45"/><path d="M904.9 629 V631.5" stroke="#e8e8e8" stroke-width="1" opacity="0.45"/><path d="M912.1 629 V631.5" stroke="#e8e8e8" stroke-width="1" opacity="0.45"/><path d="M919.2 629 V633" stroke="#e8e8e8" stroke-width="1" opacity="0.45"/><path d="M926.4 629 V631.5" stroke="#e8e8e8" stroke-width="1" opacity="0.45"/><path d="M933.5 629 V631.5" stroke="#e8e8e8" stroke-width="1" opacity="0.45"/><path d="M940.7 629 V631.5" stroke="#e8e8e8" stroke-width="1" opacity="0.45"/><path d="M947.8 629 V631.5" stroke="#e8e8e8" stroke-width="1" opacity="0.45"/><path d="M955.0 629 V635" stroke="#e8e8e8" stroke-width="1" opacity="0.45"/><path d="M962.1 629 V631.5" stroke="#e8e8e8" stroke-width="1" opacity="0.45"/><path d="M969.3 629 V631.5" stroke="#e8e8e8" stroke-width="1" opacity="0.45"/><path d="M976.4 629 V631.5" stroke="#e8e8e8" stroke-width="1" opacity="0.45"/><path d="M983.6 629 V631.5" stroke="#e8e8e8" stroke-width="1" opacity="0.45"/><path d="M990.7 629 V633" stroke="#e8e8e8" stroke-width="1" opacity="0.45"/><path d="M997.9 629 V631.5" stroke="#e8e8e8" stroke-width="1" opacity="0.45"/><path d="M1005.0 629 V631.5" stroke="#e8e8e8" stroke-width="1" opacity="0.45"/><path d="M1012.2 629 V631.5" stroke="#e8e8e8" stroke-width="1" opacity="0.45"/><path d="M1019.3 629 V631.5" stroke="#e8e8e8" stroke-width="1" opacity="0.45"/><path d="M1026.5 629 V635" stroke="#e8e8e8" stroke-width="1" opacity="0.45"/><path d="M1033.6 629 V631.5" stroke="#e8e8e8" stroke-width="1" opacity="0.45"/><path d="M1040.8 629 V631.5" stroke="#e8e8e8" stroke-width="1" opacity="0.45"/><path d="M1047.9 629 V631.5" stroke="#e8e8e8" stroke-width="1" opacity="0.45"/><path d="M1055.1 629 V631.5" stroke="#e8e8e8" stroke-width="1" opacity="0.45"/><path d="M1062.2 629 V633" stroke="#e8e8e8" stroke-width="1" opacity="0.45"/><path d="M1069.4 629 V631.5" stroke="#e8e8e8" stroke-width="1" opacity="0.45"/><path d="M1076.5 629 V631.5" stroke="#e8e8e8" stroke-width="1" opacity="0.45"/><path d="M1083.7 629 V631.5" stroke="#e8e8e8" stroke-width="1" opacity="0.45"/><path d="M1090.8 629 V631.5" stroke="#e8e8e8" stroke-width="1" opacity="0.45"/><path d="M1098.0 629 V635" stroke="#e8e8e8" stroke-width="1" opacity="0.45"/><path d="M1105.1 629 V631.5" stroke="#e8e8e8" stroke-width="1" opacity="0.45"/><path d="M1112.3 629 V631.5" stroke="#e8e8e8" stroke-width="1" opacity="0.45"/><path d="M1119.4 629 V631.5" stroke="#e8e8e8" stroke-width="1" opacity="0.45"/><path d="M1126.6 629 V631.5" stroke="#e8e8e8" stroke-width="1" opacity="0.45"/><path d="M1133.7 629 V633" stroke="#e8e8e8" stroke-width="1" opacity="0.45"/><path d="M1140.9 629 V631.5" stroke="#e8e8e8" stroke-width="1" opacity="0.45"/><path d="M1148.0 629 V631.5" stroke="#e8e8e8" stroke-width="1" opacity="0.45"/><path d="M1155.2 629 V631.5" stroke="#e8e8e8" stroke-width="1" opacity="0.45"/><path d="M1162.3 629 V631.5" stroke="#e8e8e8" stroke-width="1" opacity="0.45"/><path d="M1169.5 629 V635" stroke="#e8e8e8" stroke-width="1" opacity="0.45"/><path d="M1176.6 629 V631.5" stroke="#e8e8e8" stroke-width="1" opacity="0.45"/><path d="M1183.8 629 V631.5" stroke="#e8e8e8" stroke-width="1" opacity="0.45"/><path d="M1190.9 629 V631.5" stroke="#e8e8e8" stroke-width="1" opacity="0.45"/><path d="M1198.1 629 V631.5" stroke="#e8e8e8" stroke-width="1" opacity="0.45"/><path d="M1205.2 629 V633" stroke="#e8e8e8" stroke-width="1" opacity="0.45"/><path d="M1212.4 629 V631.5" stroke="#e8e8e8" stroke-width="1" opacity="0.45"/><path d="M1219.6 629 V631.5" stroke="#e8e8e8" stroke-width="1" opacity="0.45"/><path d="M1226.7 629 V631.5" stroke="#e8e8e8" stroke-width="1" opacity="0.45"/><path d="M1233.9 629 V631.5" stroke="#e8e8e8" stroke-width="1" opacity="0.45"/><path d="M1241.0 629 V635" stroke="#e8e8e8" stroke-width="1" opacity="0.45"/><path d="M1248.2 629 V631.5" stroke="#e8e8e8" stroke-width="1" opacity="0.45"/><path d="M1255.3 629 V631.5" stroke="#e8e8e8" stroke-width="1" opacity="0.45"/><path d="M1262.5 629 V631.5" stroke="#e8e8e8" stroke-width="1" opacity="0.45"/><path d="M1269.6 629 V631.5" stroke="#e8e8e8" stroke-width="1" opacity="0.45"/><path d="M1276.8 629 V633" stroke="#e8e8e8" stroke-width="1" opacity="0.45"/><path d="M1283.9 629 V631.5" stroke="#e8e8e8" stroke-width="1" opacity="0.45"/><path d="M1102 651.5 H1170" stroke="#555" stroke-width="1.6" stroke-dasharray="1.6 1.9"/><defs><filter id="fb1" x="0" y="0" width="1" height="1" color-interpolation-filters="sRGB"><feTurbulence type="fractalNoise" baseFrequency="0.28 0.0035" numOctaves="3" seed="8"/><feColorMatrix type="matrix" values="1 0 0 0 0  1 0 0 0 0  1 0 0 0 0  0 0 0 0 1" result="a"/><feTurbulence type="fractalNoise" baseFrequency="0.55 0.09" numOctaves="2" seed="2"/><feColorMatrix type="matrix" values="1 0 0 0 0  1 0 0 0 0  1 0 0 0 0  0 0 0 0 1" result="b"/><feComposite in="a" in2="b" operator="arithmetic" k1="0" k2="0.8" k3="0.35" k4="-0.075"/><feColorMatrix type="matrix" values="0.3 0 0 0 -0.1  0.55 0 0 0 -0.22  2.7 0 0 0 -0.68  0 0 0 0 1"/></filter><filter id="fb2" x="0" y="0" width="1" height="1" color-interpolation-filters="sRGB"><feTurbulence type="fractalNoise" baseFrequency="0.33 0.004" numOctaves="3" seed="21"/><feColorMatrix type="matrix" values="1 0 0 0 0  1 0 0 0 0  1 0 0 0 0  0 0 0 0 1" result="a"/><feTurbulence type="fractalNoise" baseFrequency="0.6 0.12" numOctaves="2" seed="7"/><feColorMatrix type="matrix" values="1 0 0 0 0  1 0 0 0 0  1 0 0 0 0  0 0 0 0 1" result="b"/><feComposite in="a" in2="b" operator="arithmetic" k1="0" k2="0.75" k3="0.45" k4="-0.1"/><feColorMatrix type="matrix" values="0.3 0 0 0 -0.14  1.9 0 0 0 -0.7  1.7 0 0 0 0.1  0 0 0 0 1"/></filter><filter id="fb3" x="0" y="0" width="1" height="1" color-interpolation-filters="sRGB"><feTurbulence type="fractalNoise" baseFrequency="0.2 0.003" numOctaves="3" seed="33"/><feColorMatrix type="matrix" values="1 0 0 0 0  1 0 0 0 0  1 0 0 0 0  0 0 0 0 1" result="a"/><feTurbulence type="fractalNoise" baseFrequency="0.5 0.06" numOctaves="2" seed="9"/><feColorMatrix type="matrix" values="1 0 0 0 0  1 0 0 0 0  1 0 0 0 0  0 0 0 0 1" result="b"/><feComposite in="a" in2="b" operator="arithmetic" k1="0" k2="0.7" k3="0.4" k4="-0.05"/><feColorMatrix type="matrix" values="0 0 0 0 0  -0.4 0 0 0 1.16  3.0 0 0 0 -1.12  0 0 0 0 1"/></filter><filter id="fdots" x="0" y="0" width="1" height="1" color-interpolation-filters="sRGB"><feTurbulence type="fractalNoise" baseFrequency="0.45 0.12" numOctaves="2" seed="5"/><feColorMatrix type="matrix" values="0.6 0 0 0 -0.3  1.6 0 0 0 -0.95  6.5 0 0 0 -3.45  0 0 0 0 1"/></filter><linearGradient id="env1" x1="0" y1="0" x2="1" y2="0"><stop offset="0" stop-color="#000" stop-opacity="1"/><stop offset="0.045" stop-color="#000" stop-opacity="0.7"/><stop offset="0.075" stop-color="#000" stop-opacity="0.1"/><stop offset="0.3" stop-color="#000" stop-opacity="0.05"/><stop offset="0.5" stop-color="#000" stop-opacity="0.1"/><stop offset="0.545" stop-color="#000" stop-opacity="0.3"/><stop offset="0.57" stop-color="#000" stop-opacity="0.86"/><stop offset="0.8" stop-color="#000" stop-opacity="0.9"/><stop offset="0.9" stop-color="#000" stop-opacity="0.96"/><stop offset="1" stop-color="#000" stop-opacity="1"/></linearGradient><linearGradient id="envd" x1="0" y1="0" x2="1" y2="0"><stop offset="0" stop-color="#000" stop-opacity="1"/><stop offset="0.14" stop-color="#000" stop-opacity="0.92"/><stop offset="0.19" stop-color="#000" stop-opacity="0.1"/><stop offset="0.25" stop-color="#000" stop-opacity="0.15"/><stop offset="0.31" stop-color="#000" stop-opacity="0.92"/><stop offset="0.5" stop-color="#000" stop-opacity="0.95"/><stop offset="0.63" stop-color="#000" stop-opacity="0.9"/><stop offset="0.69" stop-color="#000" stop-opacity="0.1"/><stop offset="0.76" stop-color="#000" stop-opacity="0.15"/><stop offset="0.83" stop-color="#000" stop-opacity="0.9"/><stop offset="1" stop-color="#000" stop-opacity="1"/></linearGradient><filter id="fblur" x="-2" y="-0.5" width="5" height="2"><feGaussianBlur stdDeviation="1.6 9"/></filter><clipPath id="cw1"><rect x="308" y="655" width="135" height="403"/></clipPath><clipPath id="cw2"><rect x="993" y="655" width="71.5" height="403"/></clipPath><clipPath id="cw3"><rect x="1101" y="655" width="70.5" height="403"/></clipPath><clipPath id="cwd"><rect x="706" y="662" width="44" height="396"/></clipPath></defs><g clip-path="url(#cw1)"><rect x="300" y="655" width="160" height="403" filter="url(#fb1)" transform="translate(0 0) skewX(-0.6)"/></g><rect x="308" y="655" width="135" height="403" fill="url(#env1)"/><path d="M418 655 Q419 905 433 1058" fill="none" stroke="#0a18c4" stroke-width="1.2" opacity="0.4"/><path d="M352 655 Q352 905 361 1058" fill="none" stroke="#000" stroke-width="2" opacity="0.35"/><rect x="669" y="655" width="1" height="403" fill="#1a58e8" opacity="0.8"/><rect x="671" y="655" width="0.6" height="403" fill="#2a9a50" opacity="0.5"/><rect x="669.9" y="655" width="1.1" height="403" fill="#c8f4f4"/><rect x="740.2" y="655" width="1" height="403" fill="#58b838" opacity="0.7"/><rect x="741" y="655" width="1.1" height="403" fill="#f4fff0"/><rect x="884.6" y="655" width="1.2" height="403" fill="#1a2ac8" opacity="0.85"/><rect x="660" y="655" width="3" height="403" fill="#0a10a0" opacity="0.18"/><rect x="674" y="655" width="2.5" height="403" fill="#0a10c0" opacity="0.3"/><rect x="679" y="655" width="2" height="403" fill="#0a10a0" opacity="0.15"/><g clip-path="url(#cwd)"><rect x="700" y="662" width="56" height="396" filter="url(#fdots)"/></g><rect x="706" y="662" width="44" height="396" fill="url(#envd)"/><rect x="740.2" y="655" width="1" height="403" fill="#58b838" opacity="0.7"/><rect x="741" y="655" width="1.1" height="403" fill="#f4fff0"/><g clip-path="url(#cw2)"><rect x="980" y="655" width="100" height="403" filter="url(#fb2)" transform="translate(12 0) skewX(-1.2)"/></g><path d="M1013 655 L1015 1058" stroke="#00105a" stroke-width="2.5" opacity="0.5"/><path d="M1037 655 L1041 1058" stroke="#00105a" stroke-width="2" opacity="0.45"/><path d="M1003 655 L1008 1058" stroke="#00105a" stroke-width="1.5" opacity="0.4"/><g clip-path="url(#cw3)"><rect x="1090" y="655" width="95" height="403" filter="url(#fb3)"/></g><g filter="url(#fblur)"><ellipse cx="1111" cy="905" rx="2.6" ry="120" fill="#0a40e0" opacity="0.8"/><ellipse cx="1110.5" cy="865" rx="3" ry="48" fill="#0830d0"/><ellipse cx="1131" cy="850" rx="3.4" ry="52" fill="#0628c8"/><ellipse cx="1131.5" cy="900" rx="2" ry="70" fill="#1050e0" opacity="0.6"/><ellipse cx="1155" cy="790" rx="1.9" ry="46" fill="#1a60e8" opacity="0.65"/><ellipse cx="1168" cy="965" rx="1.9" ry="42" fill="#1a60e8" opacity="0.6"/><ellipse cx="1115.5" cy="690" rx="2" ry="42" fill="#2080f0" opacity="0.6"/><ellipse cx="1126" cy="1045" rx="2" ry="32" fill="#1a50e0" opacity="0.75"/><ellipse cx="1146" cy="1045" rx="2" ry="32" fill="#1a50e0" opacity="0.75"/><ellipse cx="1141" cy="760" rx="6" ry="110" fill="#20f0e0" opacity="0.3"/><ellipse cx="1113" cy="760" rx="6" ry="90" fill="#20f0e0" opacity="0.3"/><ellipse cx="1122" cy="960" rx="5" ry="80" fill="#20f0e0" opacity="0.25"/></g></svg>
<div class="t" style="left:1132.7px;top:150.0px;font-size:10px;line-height:12px;color:#fff;">1</div>
<div class="t" style="left:270.5px;top:144.0px;font-size:9.99px;line-height:12px;color:#e4e4e4;letter-spacing:-0.11px;">-35 dBm</div>
<div class="t" style="left:270.5px;top:182.0px;font-size:9.99px;line-height:12px;color:#e4e4e4;letter-spacing:-0.11px;">-40 dBm</div>
<div class="t" style="left:270.5px;top:220.0px;font-size:9.99px;line-height:12px;color:#e4e4e4;letter-spacing:-0.11px;">-45 dBm</div>
<div class="t" style="left:270.5px;top:257.0px;font-size:9.99px;line-height:12px;color:#e4e4e4;letter-spacing:-0.11px;">-50 dBm</div>
<div class="t" style="left:270.5px;top:295.0px;font-size:9.99px;line-height:12px;color:#e4e4e4;letter-spacing:-0.11px;">-55 dBm</div>
<div class="t" style="left:270.5px;top:333.0px;font-size:9.99px;line-height:12px;color:#e4e4e4;letter-spacing:-0.11px;">-60 dBm</div>
<div class="t" style="left:270.5px;top:370.0px;font-size:9.99px;line-height:12px;color:#e4e4e4;letter-spacing:-0.11px;">-65 dBm</div>
<div class="t" style="left:270.5px;top:408.0px;font-size:9.99px;line-height:12px;color:#e4e4e4;letter-spacing:-0.11px;">-70 dBm</div>
<div class="t" style="left:270.5px;top:446.0px;font-size:9.99px;line-height:12px;color:#e4e4e4;letter-spacing:-0.11px;">-75 dBm</div>
<div class="t" style="left:270.5px;top:483.0px;font-size:9.99px;line-height:12px;color:#e4e4e4;letter-spacing:-0.11px;">-80 dBm</div>
<div class="t" style="left:270.5px;top:521.0px;font-size:9.99px;line-height:12px;color:#e4e4e4;letter-spacing:-0.11px;">-85 dBm</div>
<div class="t" style="left:270.5px;top:558.0px;font-size:9.99px;line-height:12px;color:#e4e4e4;letter-spacing:-0.11px;">-90 dBm</div>
<div class="t" style="left:270.5px;top:596.0px;font-size:9.99px;line-height:12px;color:#e4e4e4;letter-spacing:-0.11px;">-95 dBm</div>
<div class="t" style="left:297.4px;top:635.0px;font-size:9.87px;line-height:12px;color:#f0f0f0;letter-spacing:-0.28px;">13.710</div>
<div class="t" style="left:369.1px;top:635.0px;font-size:9.87px;line-height:12px;color:#f0f0f0;letter-spacing:-0.28px;">13.720</div>
<div class="t" style="left:440.7px;top:635.0px;font-size:9.87px;line-height:12px;color:#f0f0f0;letter-spacing:-0.28px;">13.730</div>
<div class="t" style="left:512.3px;top:635.0px;font-size:9.87px;line-height:12px;color:#f0f0f0;letter-spacing:-0.28px;">13.740</div>
<div class="t" style="left:583.9px;top:635.0px;font-size:9.87px;line-height:12px;color:#f0f0f0;letter-spacing:-0.28px;">13.750</div>
<div class="t" style="left:655.5px;top:635.0px;font-size:9.87px;line-height:12px;color:#f0f0f0;letter-spacing:-0.28px;">13.760</div>
<div class="t" style="left:727.2px;top:635.0px;font-size:9.87px;line-height:12px;color:#f0f0f0;letter-spacing:-0.28px;">13.770</div>
<div class="t" style="left:798.8px;top:635.0px;font-size:9.87px;line-height:12px;color:#f0f0f0;letter-spacing:-0.28px;">13.780</div>
<div class="t" style="left:870.4px;top:635.0px;font-size:9.87px;line-height:12px;color:#f0f0f0;letter-spacing:-0.28px;">13.790</div>
<div class="t" style="left:942.0px;top:635.0px;font-size:9.87px;line-height:12px;color:#f0f0f0;letter-spacing:-0.28px;">13.800</div>
<div class="t" style="left:1013.7px;top:635.0px;font-size:9.87px;line-height:12px;color:#f0f0f0;letter-spacing:-0.28px;">13.810</div>
<div class="t" style="left:1085.3px;top:635.0px;font-size:9.87px;line-height:12px;color:#f0f0f0;letter-spacing:-0.28px;">13.820</div>
<div class="t" style="left:1156.9px;top:635.0px;font-size:9.87px;line-height:12px;color:#f0f0f0;letter-spacing:-0.28px;">13.830</div>
<div class="t" style="left:1228.5px;top:635.0px;font-size:9.87px;line-height:12px;color:#f0f0f0;letter-spacing:-0.28px;">13.840</div>
<div class="a" style="left:323.5px;top:140.5px;width:290px;height:114px;background:#000;border:1px solid #262626;box-sizing:border-box;"></div>
<svg style="left:0;top:0" width="1284" height="300" viewBox="0 0 1284 300"><path d="M351.5 198.0 A343.4 343.4 0 0 1 584.7 198.0" fill="none" stroke="#fff" stroke-width="2.6"/><path d="M351.7 198.5 L347.3 186.2" stroke="#f4f4f4" stroke-width="1.6"/><path d="M367.8 193.1 L365.4 185.5" stroke="#f4f4f4" stroke-width="1.1"/><path d="M384.1 188.5 L380.9 175.9" stroke="#f4f4f4" stroke-width="1.6"/><path d="M400.7 184.8 L399.1 177.0" stroke="#f4f4f4" stroke-width="1.1"/><path d="M417.4 181.9 L415.5 169.0" stroke="#f4f4f4" stroke-width="1.6"/><path d="M434.2 179.8 L433.4 171.8" stroke="#f4f4f4" stroke-width="1.1"/><path d="M451.1 178.5 L450.5 165.5" stroke="#f4f4f4" stroke-width="1.6"/><path d="M468.1 178.1 L468.1 170.1" stroke="#f4f4f4" stroke-width="1.1"/><path d="M485.1 178.5 L485.7 165.5" stroke="#f4f4f4" stroke-width="1.6"/><path d="M502.0 179.8 L502.8 171.8" stroke="#f4f4f4" stroke-width="1.1"/><path d="M518.8 181.9 L520.7 169.0" stroke="#f4f4f4" stroke-width="1.6"/><path d="M535.5 184.8 L537.1 177.0" stroke="#f4f4f4" stroke-width="1.1"/><path d="M552.1 188.5 L555.3 175.9" stroke="#f4f4f4" stroke-width="1.6"/><path d="M568.4 193.1 L570.8 185.5" stroke="#f4f4f4" stroke-width="1.1"/><path d="M584.5 198.5 L588.9 186.2" stroke="#f4f4f4" stroke-width="1.6"/><path d="M413.5 164 L427.5 255" stroke="#c8c8c8" stroke-width="1.1"/><path d="M485.4 153.5 L481.2 255" stroke="#e21b1b" stroke-width="1.7"/></svg>
<div class="t" style="left:332.0px;top:143.0px;font-size:14.5px;line-height:18px;color:#f4f4f4;letter-spacing:-0.11px;">dBm</div>
<div class="t" style="left:340.5px;top:171.0px;font-size:11px;line-height:14px;color:#dcdcdc;font-style:italic;">-140</div>
<div class="t" style="left:371.0px;top:161.0px;font-size:11px;line-height:14px;color:#dcdcdc;font-style:italic;">-120</div>
<div class="t" style="left:404.8px;top:154.0px;font-size:11px;line-height:14px;color:#dcdcdc;font-style:italic;">-100</div>
<div class="t" style="left:442.9px;top:151.0px;font-size:11px;line-height:14px;color:#dcdcdc;font-style:italic;">-80</div>
<div class="t" style="left:478.1px;top:151.0px;font-size:11px;line-height:14px;color:#dcdcdc;font-style:italic;">-60</div>
<div class="t" style="left:513.1px;top:153.0px;font-size:11px;line-height:14px;color:#dcdcdc;font-style:italic;">-40</div>
<div class="t" style="left:546.9px;top:160.0px;font-size:11px;line-height:14px;color:#dcdcdc;font-style:italic;">-20</div>
<div class="t" style="left:585.6px;top:171.0px;font-size:11px;line-height:14px;color:#dcdcdc;font-style:italic;">0</div>
<svg style="left:0;top:0" width="1284" height="300" viewBox="0 0 1284 300"><path d="M485.4 153.5 L481.2 255" stroke="#e21b1b" stroke-width="1.7"/></svg>
<div class="a" style="left:438.5px;top:220px;width:59px;height:20.5px;background:linear-gradient(#cfdd55,#bccb3a);border-radius:3px;"></div>
<div class="t" style="left:450.5px;top:222.0px;font-size:14.5px;line-height:18px;color:#111;font-weight:bold;letter-spacing:0.39px;">-60.2</div>
<div class="a" style="left:266px;top:1058px;width:1018px;height:27px;background:#000;"></div>
<div class="a" style="left:266px;top:1058px;width:1018px;height:27px;background:linear-gradient(#8a8a8a 0,#4a4a4a 2px,#1e1e1e 9px,#000 14px,#000 100%);"></div>
<div class="a" style="left:692px;top:1058px;width:592px;height:27px;background:linear-gradient(#8a8a8a 0,#5a5a5a 2px,#454545 8px,#3a3a3a 14px,rgba(58,58,58,0) 100%),linear-gradient(90deg,#2a2a2a 0%,#4a4a22 18%,#77741f 45%,#8a861e 75%,#6e6a1c 100%);"></div>
<div class="a" style="left:760px;top:1084px;width:524px;height:1px;background:linear-gradient(90deg,rgba(230,224,60,0),#e6e03c 30%,#e6e03c);"></div>
<svg style="left:0;top:0" width="1284" height="1108" viewBox="0 0 1284 1108"><path d="M302.1 1059 V1062.5" stroke="#cfcfcf" stroke-width="1" opacity="0.8"/><path d="M318.6 1059 V1062.5" stroke="#cfcfcf" stroke-width="1" opacity="0.8"/><path d="M335.0 1059 V1062.5" stroke="#cfcfcf" stroke-width="1" opacity="0.8"/><path d="M351.4 1059 V1065" stroke="#cfcfcf" stroke-width="1" opacity="0.8"/><path d="M367.8 1059 V1062.5" stroke="#cfcfcf" stroke-width="1" opacity="0.8"/><path d="M384.2 1059 V1062.5" stroke="#cfcfcf" stroke-width="1" opacity="0.8"/><path d="M400.7 1059 V1062.5" stroke="#cfcfcf" stroke-width="1" opacity="0.8"/><path d="M417.1 1059 V1062.5" stroke="#cfcfcf" stroke-width="1" opacity="0.8"/><path d="M433.5 1059 V1062.5" stroke="#cfcfcf" stroke-width="1" opacity="0.8"/><path d="M449.9 1059 V1062.5" stroke="#cfcfcf" stroke-width="1" opacity="0.8"/><path d="M466.3 1059 V1062.5" stroke="#cfcfcf" stroke-width="1" opacity="0.8"/><path d="M482.8 1059 V1062.5" stroke="#cfcfcf" stroke-width="1" opacity="0.8"/><path d="M499.2 1059 V1062.5" stroke="#cfcfcf" stroke-width="1" opacity="0.8"/><path d="M515.6 1059 V1065" stroke="#cfcfcf" stroke-width="1" opacity="0.8"/><path d="M532.0 1059 V1062.5" stroke="#cfcfcf" stroke-width="1" opacity="0.8"/><path d="M548.4 1059 V1062.5" stroke="#cfcfcf" stroke-width="1" opacity="0.8"/><path d="M564.9 1059 V1062.5" stroke="#cfcfcf" stroke-width="1" opacity="0.8"/><path d="M581.3 1059 V1062.5" stroke="#cfcfcf" stroke-width="1" opacity="0.8"/><path d="M597.7 1059 V1062.5" stroke="#cfcfcf" stroke-width="1" opacity="0.8"/><path d="M614.1 1059 V1062.5" stroke="#cfcfcf" stroke-width="1" opacity="0.8"/><path d="M630.5 1059 V1062.5" stroke="#cfcfcf" stroke-width="1" opacity="0.8"/><path d="M647.0 1059 V1062.5" stroke="#cfcfcf" stroke-width="1" opacity="0.8"/><path d="M663.4 1059 V1062.5" stroke="#cfcfcf" stroke-width="1" opacity="0.8"/><path d="M679.8 1059 V1065" stroke="#cfcfcf" stroke-width="1" opacity="0.8"/><path d="M696.2 1059 V1062.5" stroke="#cfcfcf" stroke-width="1" opacity="0.8"/><path d="M712.6 1059 V1062.5" stroke="#cfcfcf" stroke-width="1" opacity="0.8"/><path d="M729.1 1059 V1062.5" stroke="#cfcfcf" stroke-width="1" opacity="0.8"/><path d="M745.5 1059 V1062.5" stroke="#cfcfcf" stroke-width="1" opacity="0.8"/><path d="M761.9 1059 V1062.5" stroke="#cfcfcf" stroke-width="1" opacity="0.8"/><path d="M778.3 1059 V1062.5" stroke="#cfcfcf" stroke-width="1" opacity="0.8"/><path d="M794.7 1059 V1062.5" stroke="#cfcfcf" stroke-width="1" opacity="0.8"/><path d="M811.2 1059 V1062.5" stroke="#cfcfcf" stroke-width="1" opacity="0.8"/><path d="M827.6 1059 V1062.5" stroke="#cfcfcf" stroke-width="1" opacity="0.8"/><path d="M844.0 1059 V1065" stroke="#cfcfcf" stroke-width="1" opacity="0.8"/><path d="M860.4 1059 V1062.5" stroke="#cfcfcf" stroke-width="1" opacity="0.8"/><path d="M876.8 1059 V1062.5" stroke="#cfcfcf" stroke-width="1" opacity="0.8"/><path d="M893.3 1059 V1062.5" stroke="#cfcfcf" stroke-width="1" opacity="0.8"/><path d="M909.7 1059 V1062.5" stroke="#cfcfcf" stroke-width="1" opacity="0.8"/><path d="M926.1 1059 V1062.5" stroke="#cfcfcf" stroke-width="1" opacity="0.8"/><path d="M942.5 1059 V1062.5" stroke="#cfcfcf" stroke-width="1" opacity="0.8"/><path d="M958.9 1059 V1062.5" stroke="#cfcfcf" stroke-width="1" opacity="0.8"/><path d="M975.4 1059 V1062.5" stroke="#cfcfcf" stroke-width="1" opacity="0.8"/><path d="M991.8 1059 V1062.5" stroke="#cfcfcf" stroke-width="1" opacity="0.8"/><path d="M1008.2 1059 V1065" stroke="#cfcfcf" stroke-width="1" opacity="0.8"/><path d="M1024.6 1059 V1062.5" stroke="#cfcfcf" stroke-width="1" opacity="0.8"/><path d="M1041.0 1059 V1062.5" stroke="#cfcfcf" stroke-width="1" opacity="0.8"/><path d="M1057.5 1059 V1062.5" stroke="#cfcfcf" stroke-width="1" opacity="0.8"/><path d="M1073.9 1059 V1062.5" stroke="#cfcfcf" stroke-width="1" opacity="0.8"/><path d="M1090.3 1059 V1062.5" stroke="#cfcfcf" stroke-width="1" opacity="0.8"/><path d="M1106.7 1059 V1062.5" stroke="#cfcfcf" stroke-width="1" opacity="0.8"/><path d="M1123.1 1059 V1062.5" stroke="#cfcfcf" stroke-width="1" opacity="0.8"/><path d="M1139.6 1059 V1062.5" stroke="#cfcfcf" stroke-width="1" opacity="0.8"/><path d="M1156.0 1059 V1062.5" stroke="#cfcfcf" stroke-width="1" opacity="0.8"/><path d="M1172.4 1059 V1065" stroke="#cfcfcf" stroke-width="1" opacity="0.8"/><path d="M1188.8 1059 V1062.5" stroke="#cfcfcf" stroke-width="1" opacity="0.8"/><path d="M1205.2 1059 V1062.5" stroke="#cfcfcf" stroke-width="1" opacity="0.8"/><path d="M1221.7 1059 V1062.5" stroke="#cfcfcf" stroke-width="1" opacity="0.8"/><path d="M1238.1 1059 V1062.5" stroke="#cfcfcf" stroke-width="1" opacity="0.8"/><path d="M1254.5 1059 V1062.5" stroke="#cfcfcf" stroke-width="1" opacity="0.8"/><path d="M1270.9 1059 V1062.5" stroke="#cfcfcf" stroke-width="1" opacity="0.8"/><path d="M692 1058 V1085" stroke="#f4f4f4" stroke-width="1.4"/><path d="M1090.3 1058 V1085" stroke="#f2ea3a" stroke-width="1.4"/></svg>
<div class="t" style="left:332.9px;top:1068.0px;font-size:12.5px;line-height:16px;color:#e2e2e2;letter-spacing:-0.21px;">13.600</div>
<div class="t" style="left:497.1px;top:1068.0px;font-size:12.5px;line-height:16px;color:#e2e2e2;letter-spacing:-0.21px;">13.650</div>
<div class="t" style="left:661.3px;top:1068.0px;font-size:12.5px;line-height:16px;color:#e2e2e2;letter-spacing:-0.21px;">13.700</div>
<div class="t" style="left:825.5px;top:1068.0px;font-size:12.5px;line-height:16px;color:#e2e2e2;letter-spacing:-0.21px;">13.750</div>
<div class="t" style="left:989.7px;top:1068.0px;font-size:12.5px;line-height:16px;color:#e2e2e2;letter-spacing:-0.21px;">13.800</div>
<div class="t" style="left:1153.9px;top:1068.0px;font-size:12.5px;line-height:16px;color:#e2e2e2;letter-spacing:-0.21px;">13.850</div>
<div class="a" style="left:267px;top:1059px;width:25.5px;height:25.5px;background:#e4e4e4;border:1px solid #cfcfcf;box-sizing:border-box;"></div>
<svg style="left:272px;top:1063.5px" width="16" height="16" viewBox="0 0 16 16"><circle cx="8" cy="8" r="7" fill="#fbfbfb" stroke="#444" stroke-width="1.2"/><path d="M8 4.8 V11.2 L4 8 Z M12 4.8 V11.2 L8 8 Z" fill="#333"/></svg>
<div class="a" style="left:1045px;top:989px;width:190px;height:60px;background:rgba(0,0,0,0.72);"></div>
<div class="t" style="left:1054.0px;top:999.0px;font-size:13.6px;line-height:16px;color:#f2f2f2;font-family:'Liberation Mono','Noto Sans CJK SC',monospace;letter-spacing:0.02px;">Freq: 13.824.999 MHz</div>
<div class="t" style="left:1054.0px;top:1022.0px;font-size:13.6px;line-height:16px;color:#f2f2f2;font-family:'Liberation Mono','Noto Sans CJK SC',monospace;letter-spacing:0.02px;white-space:pre;">Span:   ±121.340 kHz</div>
<div class="a" style="left:417px;top:275px;width:490px;height:329px;background:#f0f0f0;box-shadow:0 0 0 1px rgba(90,90,90,0.55),0 2px 10px rgba(0,0,0,0.5);"></div>
<div class="a" style="left:417px;top:275px;width:490px;height:30px;background:#fff;"></div>
<svg style="left:425px;top:281px" width="16" height="16" viewBox="0 0 16 16"><rect x="0" y="0" width="16" height="16" rx="1.5" fill="#3d4a7a"/><circle cx="8" cy="8" r="5.6" fill="#fff"/></svg>
<div class="t" style="left:429.2px;top:283.0px;font-size:10.5px;line-height:12px;color:#3d4a7a;font-weight:bold;">D</div>
<div class="t" style="left:447.0px;top:282.0px;font-size:13px;line-height:16px;color:#999;letter-spacing:-0.07px;">dream</div>
<svg style="left:780px;top:279px" width="120" height="20" viewBox="0 0 120 20"><path d="M8 10.5 H19" stroke="#777" stroke-width="1"/><rect x="53.5" y="5.5" width="9" height="9" fill="none" stroke="#777" stroke-width="1"/><path d="M99 5 L109 15 M109 5 L99 15" stroke="#777" stroke-width="1"/></svg>
<div class="t" style="left:424px;top:311px;font-size:12.5px;line-height:15px;color:#8e8e8e;letter-spacing:0.0px;"><span style="text-decoration:underline">V</span>iew</div>
<div class="t" style="left:460.8px;top:311px;font-size:12.5px;line-height:15px;color:#8e8e8e;letter-spacing:-0.05px;"><span style="text-decoration:underline">S</span>ettings</div>
<div class="t" style="left:517.2px;top:311px;font-size:12.5px;line-height:15px;color:#8e8e8e;letter-spacing:0px;"><span style="text-decoration:underline">?</span></div>
<div class="a" style="left:417px;top:330px;width:490px;height:1px;background:#a8a8a8;"></div>
<div class="a" style="left:428px;top:343px;width:468px;height:111px;background:#000;border:1.5px solid #8a0c18;box-sizing:border-box;box-shadow:0 0 2.5px 0.5px #ffb4b4;"></div>
<div class="t" style="left:436.6px;top:350.0px;font-size:8.6px;line-height:10px;color:#e01818;font-weight:bold;letter-spacing:0.34px;">Level [dB]</div>
<div class="t" style="left:448.4px;top:367.0px;font-size:11px;line-height:14px;color:#e01818;">0</div>
<div class="t" style="left:438.6px;top:378.0px;font-size:11px;line-height:14px;color:#e01818;">-10</div>
<div class="t" style="left:438.6px;top:388.0px;font-size:11px;line-height:14px;color:#e01818;">-20</div>
<div class="t" style="left:438.6px;top:399.0px;font-size:11px;line-height:14px;color:#e01818;">-30</div>
<div class="t" style="left:438.6px;top:409.0px;font-size:11px;line-height:14px;color:#e01818;">-40</div>
<div class="t" style="left:438.6px;top:419.0px;font-size:11px;line-height:14px;color:#e01818;">-50</div>
<svg style="left:0;top:0" width="1284" height="700" viewBox="0 0 1284 700"><path d="M456 373.3 H466" stroke="#e01818" stroke-width="0.9"/><path d="M459 378.5 H466" stroke="#e01818" stroke-width="0.9"/><path d="M456 383.8 H466" stroke="#e01818" stroke-width="0.9"/><path d="M459 389.0 H466" stroke="#e01818" stroke-width="0.9"/><path d="M456 394.3 H466" stroke="#e01818" stroke-width="0.9"/><path d="M459 399.5 H466" stroke="#e01818" stroke-width="0.9"/><path d="M456 404.7 H466" stroke="#e01818" stroke-width="0.9"/><path d="M459 410.0 H466" stroke="#e01818" stroke-width="0.9"/><path d="M456 415.2 H466" stroke="#e01818" stroke-width="0.9"/><path d="M459 420.5 H466" stroke="#e01818" stroke-width="0.9"/><path d="M456 425.7 H466" stroke="#e01818" stroke-width="0.9"/><path d="M466 371 V428.5" stroke="#e01818" stroke-width="0.9"/></svg>
<div class="a" style="left:467.6px;top:371px;width:14.7px;height:58px;border:2px solid #e01818;box-sizing:border-box;background:#000;"></div>
<div class="a" style="left:469.6px;top:379px;width:10.7px;height:8px;background:#f01a1a;"></div>
<div class="a" style="left:469.6px;top:387px;width:10.7px;height:40px;background:#20c020;"></div>
<div class="a" style="left:436.6px;top:440.8px;width:12px;height:5.6px;background:#35dc35;"></div>
<div class="a" style="left:451.7px;top:440.8px;width:12px;height:5.6px;background:#35dc35;"></div>
<div class="a" style="left:466.8px;top:440.8px;width:12px;height:5.6px;background:#35dc35;"></div>
<div class="a" style="left:490.6px;top:349.4px;width:225.5px;height:25.2px;border:1.5px solid #e01818;box-sizing:border-box;box-shadow:0 0 2px #ff3030;"></div>
<div class="t" style="left:495.4px;top:355.0px;font-size:12.6px;line-height:16px;color:#e01818;font-weight:bold;letter-spacing:0.30px;white-space:pre;">11.64 kbps UEP (21.6 %) aac Mono</div>
<div class="t" style="left:562.1px;top:386.0px;font-size:19.5px;line-height:24px;color:#6be0e0;font-family:'Liberation Serif','Noto Serif CJK SC',serif;letter-spacing:0.75px;font-weight:600;">中国之声</div>
<div class="t" style="left:490.6px;top:415.0px;font-size:12.6px;line-height:16px;color:#e01818;font-weight:bold;letter-spacing:0.35px;">Chinese (Mandarin)</div>
<div class="t" style="left:490.6px;top:432.0px;font-size:12.6px;line-height:16px;color:#e01818;font-weight:bold;letter-spacing:0.12px;">News</div>
<div class="t" style="left:675.3px;top:432.0px;font-size:12.6px;line-height:16px;color:#e01818;font-weight:bold;letter-spacing:-0.13px;">ID:3EA</div>
<div class="a" style="left:723.8px;top:351.4px;width:164px;height:93.4px;background:#fff;"></div>
<div class="a" style="left:428px;top:458.7px;width:468px;height:134px;border:1px solid #fdfdfd;box-shadow:inset 0 0 0 1px #dcdcdc;box-sizing:border-box;"></div>
<div class="a" style="left:435px;top:466px;width:43px;height:23px;background:#f6f6f6;border:1px solid;border-color:#6a6a6a #fafafa #fafafa #6a6a6a;box-shadow:inset 1px 1px 0 #a8a8a8;box-sizing:border-box;"></div>
<div class="t" style="left:453.7px;top:472.0px;font-size:10.5px;line-height:12px;color:#111;font-family:'Liberation Serif','Noto Serif CJK SC',serif;">1</div>
<div class="a" style="left:485.5px;top:465px;width:404px;height:25px;background:#f0f0f0;border:1px solid;border-color:#a6a6a6 #fdfdfd #fdfdfd #a6a6a6;box-sizing:border-box;"></div>
<div class="a" style="left:435px;top:498px;width:43px;height:23px;background:#f0f0f0;border:1px solid;border-color:#fcfcfc #6a6a6a #6a6a6a #fcfcfc;box-shadow:inset -1px -1px 0 #a8a8a8;box-sizing:border-box;"></div>
<div class="t" style="left:453.7px;top:504.0px;font-size:10.5px;line-height:12px;color:#8a8a8a;font-family:'Liberation Serif','Noto Serif CJK SC',serif;">2</div>
<div class="a" style="left:485.5px;top:497px;width:404px;height:25px;background:#f0f0f0;border:1px solid;border-color:#a6a6a6 #fdfdfd #fdfdfd #a6a6a6;box-sizing:border-box;"></div>
<div class="a" style="left:435px;top:530px;width:43px;height:23px;background:#f0f0f0;border:1px solid;border-color:#fcfcfc #6a6a6a #6a6a6a #fcfcfc;box-shadow:inset -1px -1px 0 #a8a8a8;box-sizing:border-box;"></div>
<div class="t" style="left:453.7px;top:536.0px;font-size:10.5px;line-height:12px;color:#8a8a8a;font-family:'Liberation Serif','Noto Serif CJK SC',serif;">3</div>
<div class="a" style="left:485.5px;top:529px;width:404px;height:25px;background:#f0f0f0;border:1px solid;border-color:#a6a6a6 #fdfdfd #fdfdfd #a6a6a6;box-sizing:border-box;"></div>
<div class="a" style="left:435px;top:562px;width:43px;height:23px;background:#f0f0f0;border:1px solid;border-color:#fcfcfc #6a6a6a #6a6a6a #fcfcfc;box-shadow:inset -1px -1px 0 #a8a8a8;box-sizing:border-box;"></div>
<div class="t" style="left:453.7px;top:568.0px;font-size:10.5px;line-height:12px;color:#8a8a8a;font-family:'Liberation Serif','Noto Serif CJK SC',serif;">4</div>
<div class="a" style="left:485.5px;top:561px;width:404px;height:25px;background:#f0f0f0;border:1px solid;border-color:#a6a6a6 #fdfdfd #fdfdfd #a6a6a6;box-sizing:border-box;"></div>
<div class="t" style="left:489.4px;top:472.0px;font-size:12px;line-height:14px;color:#111;letter-spacing:-0.12px;-webkit-text-stroke:0;">中国之声</div>
<div class="t" style="left:550.8px;top:472.0px;font-size:11px;line-height:14px;color:#111;-webkit-text-stroke:0;">|</div>
<div class="t" style="left:573.6px;top:473.0px;font-size:10px;line-height:12px;color:#222;font-family:'Liberation Mono','Noto Sans CJK SC',monospace;letter-spacing:-0.08px;-webkit-text-stroke:0.1px;">aac Mono (11.64 kbps)</div>
<svg style="left:894px;top:591px" width="12" height="12" viewBox="0 0 12 12"><path d="M11 1 L1 11 M11 5 L5 11 M11 9 L9 11" stroke="#9a9a9a" stroke-width="1"/></svg>
</div>
</body></html>
